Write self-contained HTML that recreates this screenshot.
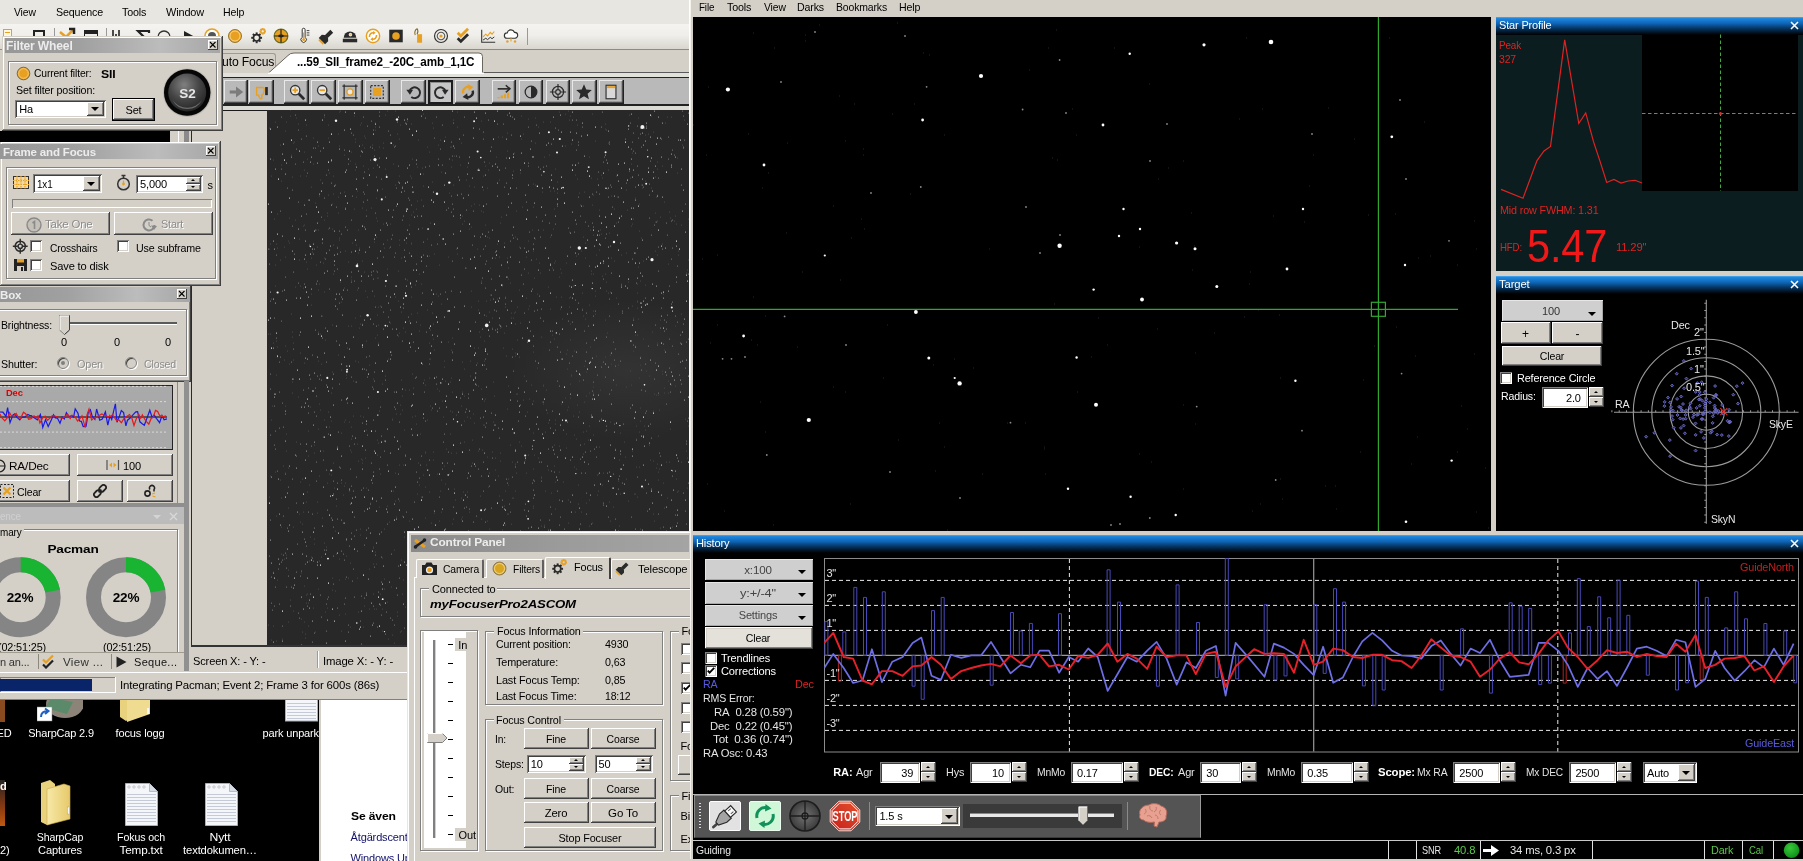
<!DOCTYPE html>
<html lang="en"><head><meta charset="utf-8"><title>Astro imaging session</title>
<style>
html,body{margin:0;padding:0;background:#000;}
body{width:1803px;height:861px;overflow:hidden;position:relative;font-family:"Liberation Sans",sans-serif;font-size:11px;}
#root{position:absolute;left:0;top:0;width:1803px;height:861px;overflow:hidden;background:#000;will-change:transform;}
#root div,#root svg{position:absolute;box-sizing:border-box;}
.t{white-space:nowrap;letter-spacing:-.15px;}
.btn{background:#d4d0c8;box-shadow:inset -1px -1px #404040,inset 1px 1px #fff,inset -2px -2px #808080,inset 2px 2px #d4d0c8;}
.fld{background:#fff;box-shadow:inset 1px 1px #808080,inset -1px -1px #fff,inset 2px 2px #404040,inset -2px -2px #d4d0c8;}
.chk{background:#fff;box-shadow:inset 1px 1px #808080,inset -1px -1px #fff,inset 2px 2px #404040,inset -2px -2px #d4d0c8;}
.grp{border:1px solid #808080;box-shadow:1px 1px 0 #fff,inset 1px 1px 0 #fff;}
.win{background:#d4d0c8;box-shadow:inset -1px -1px #404040,inset 1px 1px #d4d0c8,inset -2px -2px #808080,inset 2px 2px #fff;}
.clip{overflow:hidden;}

.ibtn{background:#b9b9b9;box-shadow:inset -1.5px -1.5px #222,inset 1px 1px #e8e8e8,inset -2.5px -2.5px #777;}
.ibtn.p{box-shadow:inset 0 0 0 2px #1c1c1c,inset 3px 3px #8c8c8c;background:#c6c6c6;}
</style></head>
<body><div id="root">
<div style="left:0px;top:0px;width:693px;height:700px;background:#d4d0c8;"></div><div style="left:0px;top:0px;width:693px;height:24px;background:#e8e6e1;"></div><div class="t" style="font-size:11px;line-height:11px;color:#000;left:14px;top:7px;transform:scaleX(0.944);transform-origin:0 0;">View</div><div class="t" style="font-size:11px;line-height:11px;color:#000;left:55.5px;top:7px;transform:scaleX(0.972);transform-origin:0 0;">Sequence</div><div class="t" style="font-size:11px;line-height:11px;color:#000;left:121.5px;top:7px;transform:scaleX(0.975);transform-origin:0 0;">Tools</div><div class="t" style="font-size:11px;line-height:11px;color:#000;left:165.5px;top:7px;transform:scaleX(0.994);transform-origin:0 0;">Window</div><div class="t" style="font-size:11px;line-height:11px;color:#000;left:222.5px;top:7px;transform:scaleX(0.967);transform-origin:0 0;">Help</div><div style="left:0px;top:24px;width:693px;height:25px;background:linear-gradient(#f5f4f1,#efeeea 45%,#d9d6ce);"></div><div style="left:0px;top:48.5px;width:693px;height:1.2px;background:#8f8b80;"></div><div style="left:2.5px;top:28.5px;width:9.5px;height:11px;border:1.300px solid #e8a020;background:#fff6e0;"></div><div style="left:4.5px;top:32px;width:5.5px;height:1.2px;background:#e8a020;"></div><div style="left:33px;top:30px;width:12px;height:12px;border:2px solid #222;"></div><div style="left:54px;top:28px;width:1px;height:16px;background:#999;"></div><svg style="left:57.0px;top:26.0px" width="20" height="20" viewBox="0 0 20 20"><path d="M3 6l6 5 7-7" stroke="#e8a020" stroke-width="2.5" fill="none"/><path d="M12 3h5v5" stroke="#222" stroke-width="2.5" fill="none"/></svg><div style="left:84px;top:30px;width:14px;height:12px;border:1.5px solid #222;border-top:4px solid #222;"></div><div style="left:106px;top:28px;width:1px;height:16px;background:#999;"></div><svg style="left:109.0px;top:26.0px" width="20" height="20" viewBox="0 0 20 20"><path d="M4 4v14M7 8v10M10 4v14M13 10v8M16 12v6" stroke="#222" stroke-width="1.6"/></svg><svg style="left:134.0px;top:26.0px" width="20" height="20" viewBox="0 0 20 20"><path d="M15 7V5H4l6 6-6 6h11v-2" stroke="#222" stroke-width="2.2" fill="none"/></svg><svg style="left:154.0px;top:26.0px" width="20" height="20" viewBox="0 0 20 20"><circle cx="10" cy="11" r="6" fill="none" stroke="#333" stroke-width="1.3"/></svg><svg style="left:179.0px;top:26.0px" width="20" height="20" viewBox="0 0 20 20"><path d="M5 5l11 6-11 6z" fill="#222"/></svg><svg style="left:202.0px;top:26.0px" width="20" height="20" viewBox="0 0 20 20"><circle cx="10" cy="10" r="7" fill="#fff" stroke="#e8a020" stroke-width="1.6"/><circle cx="10" cy="10" r="4" fill="#555"/></svg><svg style="left:226.0px;top:27.0px" width="18" height="18" viewBox="0 0 20 20"><circle cx="10" cy="10" r="7.2" fill="#e8a020" stroke="#8a6a20" stroke-width="1"/><circle cx="10" cy="10" r="5.6" fill="none" stroke="#ffd890" stroke-width="1"/></svg><svg style="left:248.5px;top:27.0px" width="18" height="18" viewBox="0 0 20 20"><circle cx="8.5" cy="12" r="3.5" fill="none" stroke="#2a2a2a" stroke-width="1.8"/><line x1="12.3" y1="12.0" x2="14.5" y2="12.0" stroke="#2a2a2a" stroke-width="2.2"/><line x1="11.2" y1="14.7" x2="12.7" y2="16.2" stroke="#2a2a2a" stroke-width="2.2"/><line x1="8.5" y1="15.8" x2="8.5" y2="18.0" stroke="#2a2a2a" stroke-width="2.2"/><line x1="5.8" y1="14.7" x2="4.3" y2="16.2" stroke="#2a2a2a" stroke-width="2.2"/><line x1="4.7" y1="12.0" x2="2.5" y2="12.0" stroke="#2a2a2a" stroke-width="2.2"/><line x1="5.8" y1="9.3" x2="4.3" y2="7.8" stroke="#2a2a2a" stroke-width="2.2"/><line x1="8.5" y1="8.2" x2="8.5" y2="6.0" stroke="#2a2a2a" stroke-width="2.2"/><line x1="11.2" y1="9.3" x2="12.7" y2="7.8" stroke="#2a2a2a" stroke-width="2.2"/><circle cx="15.2" cy="4.8" r="1.7" fill="none" stroke="#e8a020" stroke-width="0.6"/><line x1="16.6" y1="4.8" x2="18.8" y2="4.8" stroke="#e8a020" stroke-width="2.2"/><line x1="16.2" y1="5.8" x2="17.7" y2="7.3" stroke="#e8a020" stroke-width="2.2"/><line x1="15.2" y1="6.2" x2="15.2" y2="8.4" stroke="#e8a020" stroke-width="2.2"/><line x1="14.2" y1="5.8" x2="12.7" y2="7.3" stroke="#e8a020" stroke-width="2.2"/><line x1="13.8" y1="4.8" x2="11.6" y2="4.8" stroke="#e8a020" stroke-width="2.2"/><line x1="14.2" y1="3.8" x2="12.7" y2="2.3" stroke="#e8a020" stroke-width="2.2"/><line x1="15.2" y1="3.4" x2="15.2" y2="1.2" stroke="#e8a020" stroke-width="2.2"/><line x1="16.2" y1="3.8" x2="17.7" y2="2.3" stroke="#e8a020" stroke-width="2.2"/></svg><svg style="left:271.5px;top:27.0px" width="18" height="18" viewBox="0 0 20 20"><circle cx="10" cy="10" r="7.6" fill="#e8a020" stroke="#6b6b20" stroke-width="1.4"/><path d="M10 2.5v15M2.5 10h15" stroke="#222" stroke-width="1.3"/><ellipse cx="10" cy="10" rx="3.2" ry="1.6" fill="#222"/></svg><svg style="left:295.0px;top:27.0px" width="18" height="18" viewBox="0 0 20 20"><path d="M8 3a1.6 1.6 0 0 1 3.2 0v8.5a3 3 0 1 1-3.2 0z" fill="#fff" stroke="#333" stroke-width="1.1"/><circle cx="9.6" cy="14" r="1.7" fill="#e8a020"/><path d="M9.6 13V6" stroke="#e8a020" stroke-width="1.2"/><path d="M13 4h3M13 6.5h3M13 9h3" stroke="#333" stroke-width="1"/></svg><svg style="left:317.5px;top:27.0px" width="18" height="18" viewBox="0 0 20 20"><g transform="rotate(135 10 10)"><rect x="2.5" y="7.8" width="9" height="4.4" fill="#2a2a2a"/><path d="M11 7.300l2.200-2.300h4.800v10h-4.800l-2.200-2.300z" fill="#2a2a2a"/><rect x="18.300" y="6.500" width="1.800" height="7" fill="#e8a020"/></g></svg><svg style="left:340.7px;top:27.0px" width="18" height="18" viewBox="0 0 20 20"><path d="M3 12a7 7 0 0 1 14 0z" fill="#2a2a2a"/><rect x="2" y="13" width="16" height="4" fill="#2a2a2a"/><circle cx="10.5" cy="8.5" r="2" fill="#ddd"/><path d="M10.5 8.5l1.2-1" stroke="#e8a020" stroke-width="1"/></svg><svg style="left:363.5px;top:27.0px" width="18" height="18" viewBox="0 0 20 20"><circle cx="10" cy="10" r="7.4" fill="#fff" stroke="#e8a020" stroke-width="1.6"/><path d="M6 11c0-3 2-5 5-4.5M14 9c0 3-2 5-5 4.5" stroke="#e8a020" stroke-width="1.8" fill="none"/><path d="M10 4.5l3 2-3 2zM10 15.5l-3-2 3-2z" fill="#e8a020"/></svg><svg style="left:386.5px;top:27.0px" width="18" height="18" viewBox="0 0 20 20"><rect x="2.5" y="3" width="15" height="14" fill="#2a2a2a"/><circle cx="10" cy="10" r="4.2" fill="#e8a020"/></svg><svg style="left:409.0px;top:27.0px" width="18" height="18" viewBox="0 0 20 20"><rect x="9" y="8" width="5.5" height="9.5" fill="#e8a020"/><path d="M7 9c-1.5-3 0-6 2-7 1.5 2 1 4 0 6" fill="none" stroke="#8a6a20" stroke-width="1.2"/></svg><svg style="left:432.0px;top:27.0px" width="18" height="18" viewBox="0 0 20 20"><circle cx="10" cy="10" r="7.2" fill="none" stroke="#333" stroke-width="1.3"/><circle cx="10" cy="10" r="4.2" fill="none" stroke="#555" stroke-width="1.2"/><circle cx="10" cy="10" r="1.8" fill="#e8a020"/></svg><svg style="left:455.0px;top:27.0px" width="18" height="18" viewBox="0 0 20 20"><path d="M3 6.5l3.5 3.5 8-8" stroke="#e8a020" stroke-width="3.1" fill="none"/><path d="M3 12.5l3.5 3.5 8-8" stroke="#2a2a2a" stroke-width="3.1" fill="none"/></svg><svg style="left:479.0px;top:27.0px" width="18" height="18" viewBox="0 0 20 20"><path d="M3 3v14h15" stroke="#333" stroke-width="1.2" fill="none"/><path d="M4.5 11l3-3 2 2 3-4 2 2 2.5-3" stroke="#e8a020" stroke-width="1.2" fill="none"/><path d="M4.5 14.5l3-2 2 1.5 3-2.5 2 1.5 2.5-2" stroke="#333" stroke-width="1.1" fill="none"/></svg><svg style="left:501.6px;top:27.0px" width="18" height="18" viewBox="0 0 20 20"><path d="M5.5 12.5a3 3 0 0 1 .3-6 4.2 4.2 0 0 1 8-.6 3.3 3.3 0 0 1 .6 6.6z" fill="#fff" stroke="#333" stroke-width="1.3"/><circle cx="6" cy="16" r="1.4" fill="#e8a020"/><circle cx="14.5" cy="16" r="1.4" fill="#e8a020"/><path d="M10 11v5" stroke="#e8a020" stroke-width="1.2"/></svg><div style="left:526.5px;top:28px;width:1px;height:17px;background:#999;"></div><div style="left:191px;top:72px;width:498px;height:1px;background:#5a5a5a;"></div><div style="left:191px;top:73px;width:498px;height:3.7px;background:#e2e0da;"></div><div style="left:200px;top:53px;width:76px;height:20px;background:#d4d0c8;border:1px solid #a09c90;border-bottom:none;border-radius:3px 3px 0 0;"></div><div class="t" style="font-size:12.5px;line-height:12.5px;color:#000;left:222.3px;top:56px;transform:scaleX(0.977);transform-origin:0 0;">uto Focus</div><svg style="left:268px;top:52px;" width="218" height="22" viewBox="0 0 218 22"><path d="M0 21.500L20 3.500Q22 1 26 1H211Q214.500 1 214.500 4.500V21.500z" fill="#fff" stroke="#6a665c" stroke-width="1"/><rect x="0" y="20.500" width="216" height="2" fill="#fff"/></svg><div class="t" style="font-size:12.3px;line-height:12.3px;color:#000;font-weight:bold;left:296.7px;top:56.2px;transform:scaleX(0.949);transform-origin:0 0;">...59_SII_frame2_-20C_amb_1,1C</div><div style="left:191px;top:76.7px;width:498px;height:1.4px;background:#222;"></div><div style="left:190.8px;top:76px;width:1.2px;height:570px;background:#2a2a2a;"></div><div style="left:192px;top:77.5px;width:497px;height:27.5px;background:#b9b9b9;"></div><div style="left:191px;top:104.3px;width:498px;height:1.4px;background:#222;"></div><div style="left:191px;top:105.7px;width:498px;height:4.3px;background:#dcdad4;"></div><div class="ibtn" style="left:196.5px;top:79.5px;width:24.5px;height:24px;"></div><div class="ibtn" style="left:223.5px;top:79.5px;width:24.4px;height:24px;"></div><svg style="left:226.7px;top:82.5px" width="18" height="18" viewBox="0 0 20 20"><path d="M3 10h9" stroke="#7c7c7c" stroke-width="3.4"/><path d="M10 4l8 6-8 6z" fill="#7c7c7c"/></svg><div class="ibtn" style="left:249.3px;top:79.5px;width:24.4px;height:24px;"></div><svg style="left:252.5px;top:82.5px" width="18" height="18" viewBox="0 0 20 20"><path d="M4 5h6c2 0 3 1 2.5 3l-1 4c-.3 1-1 1.5-2 1.5l.5 3c0 1.5-2 1.5-2.4.3L6 13.5H4z" fill="none" stroke="#e8a020" stroke-width="1.5"/><rect x="13.5" y="4.5" width="3" height="9" fill="#2a2a2a"/></svg><div class="ibtn" style="left:284.3px;top:79.5px;width:24.4px;height:24px;"></div><svg style="left:287.5px;top:82.5px" width="18" height="18" viewBox="0 0 20 20"><circle cx="8" cy="8" r="5.2" fill="#e8e8e8" stroke="#333" stroke-width="1.5"/><path d="M12 12l6 6" stroke="#2a2a2a" stroke-width="3"/><path d="M5 8h6" stroke="#e8a020" stroke-width="2"/><path d="M8 5v6" stroke="#e8a020" stroke-width="2"/></svg><div class="ibtn" style="left:311.3px;top:79.5px;width:24.4px;height:24px;"></div><svg style="left:314.5px;top:82.5px" width="18" height="18" viewBox="0 0 20 20"><circle cx="8" cy="8" r="5.2" fill="#e8e8e8" stroke="#333" stroke-width="1.5"/><path d="M12 12l6 6" stroke="#2a2a2a" stroke-width="3"/><path d="M5 8h6" stroke="#e8a020" stroke-width="2"/></svg><div class="ibtn" style="left:338.2px;top:79.5px;width:24.4px;height:24px;"></div><svg style="left:341.4px;top:82.5px" width="18" height="18" viewBox="0 0 20 20"><rect x="3.5" y="3.5" width="13" height="13" fill="none" stroke="#333" stroke-width="1.4"/><path d="M1.5 3.5h3M3.5 1.5v3M15.5 3.5h3M16.5 1.5v3M1.5 16.5h3M3.5 15.5v3M15.5 16.5h3M16.5 15.5v3" stroke="#333" stroke-width="1.2"/><circle cx="10" cy="10" r="3.4" fill="#e8e8e8" stroke="#e8a020" stroke-width="1.4"/></svg><div class="ibtn" style="left:365.2px;top:79.5px;width:24.4px;height:24px;"></div><svg style="left:368.4px;top:82.5px" width="18" height="18" viewBox="0 0 20 20"><rect x="3" y="3" width="14" height="14" fill="none" stroke="#333" stroke-width="1.3" stroke-dasharray="2.2 1.6"/><rect x="5.5" y="5.5" width="9" height="9" fill="#e8a020"/></svg><div class="ibtn" style="left:401.3px;top:79.5px;width:24.4px;height:24px;"></div><svg style="left:404.5px;top:82.5px" width="18" height="18" viewBox="0 0 20 20"><path d="M5 9a6 6 0 1 1 2 6.5" fill="none" stroke="#2a2a2a" stroke-width="2.2"/><path d="M1.5 7.5l4 5.5 3.5-5.5z" fill="#2a2a2a"/></svg><div class="ibtn p" style="left:428.3px;top:79.5px;width:24.4px;height:24px;"></div><svg style="left:431.5px;top:82.5px" width="18" height="18" viewBox="0 0 20 20"><path d="M15 9a6 6 0 1 0-2 6.5" fill="none" stroke="#2a2a2a" stroke-width="2.2"/><path d="M18.500 7.5l-4 5.5-3.500-5.500z" fill="#2a2a2a"/></svg><div class="ibtn" style="left:455.4px;top:79.5px;width:24.4px;height:24px;"></div><svg style="left:458.6px;top:82.5px" width="18" height="18" viewBox="0 0 20 20"><path d="M4.800 11.500A5.400 5.400 0 0 1 12.500 5" fill="none" stroke="#e8a020" stroke-width="2.600"/><path d="M9.500 1l6.500 3.500-5 4z" fill="#e8a020"/><path d="M15.200 8.500A5.400 5.400 0 0 1 7.500 15" fill="none" stroke="#2a2a2a" stroke-width="2.600"/><path d="M10.500 19l-6.500-3.500 5-4z" fill="#2a2a2a"/></svg><div class="ibtn" style="left:491.5px;top:79.5px;width:24.4px;height:24px;"></div><svg style="left:494.7px;top:82.5px" width="18" height="18" viewBox="0 0 20 20"><path d="M3 6.500h13" stroke="#2a2a2a" stroke-width="1.800"/><path d="M12 2.500l4.500 4-4.500 4" stroke="#2a2a2a" stroke-width="1.800" fill="none"/><path d="M4 17v-1.500M7.500 17v-3M11 17v-4.500M14.500 17v-6.500" stroke="#e8a020" stroke-width="2.400"/></svg><div class="ibtn" style="left:518.5px;top:79.5px;width:24.4px;height:24px;"></div><svg style="left:521.7px;top:82.5px" width="18" height="18" viewBox="0 0 20 20"><circle cx="10" cy="10" r="6.500" fill="none" stroke="#2a2a2a" stroke-width="1.400"/><path d="M10 3.500a6.500 6.500 0 0 1 0 13z" fill="#2a2a2a"/></svg><div class="ibtn" style="left:545.6px;top:79.5px;width:24.4px;height:24px;"></div><svg style="left:548.8px;top:82.5px" width="18" height="18" viewBox="0 0 20 20"><circle cx="10" cy="10" r="6.200" fill="none" stroke="#2a2a2a" stroke-width="1.400"/><circle cx="10" cy="10" r="2.600" fill="none" stroke="#2a2a2a" stroke-width="1.300"/><path d="M10 1v6M10 13v6M1 10h6M13 10h6" stroke="#2a2a2a" stroke-width="1.300"/></svg><div class="ibtn" style="left:572.2px;top:79.5px;width:24.4px;height:24px;"></div><svg style="left:575.4px;top:82.5px" width="18" height="18" viewBox="0 0 20 20"><path d="M10 1.500l2.500 5.800 6.200.500-4.700 4.100 1.500 6.100L10 14.700 4.500 18l1.500-6.100L1.300 7.800l6.200-.500z" fill="#2a2a2a"/></svg><div class="ibtn" style="left:599.2px;top:79.5px;width:24.4px;height:24px;"></div><svg style="left:602.4px;top:82.5px" width="18" height="18" viewBox="0 0 20 20"><rect x="4.500" y="2.500" width="11" height="15" fill="#d8d8d8" stroke="#333" stroke-width="1.300"/><rect x="5.500" y="3.500" width="9" height="2.200" fill="#e8a020"/></svg><div style="left:192px;top:110px;width:75px;height:535px;background:#d4d0c8;border-top:1.200px solid #1a1a1a;"></div><svg style="left:267px;top:110px;" width="422" height="536" viewBox="-1 0 422 536"><defs><radialGradient id="neb"><stop offset="0" stop-color="#3a3a3a"/><stop offset="1" stop-color="#3a3a3a" stop-opacity="0"/></radialGradient></defs><rect x="-1" width="422" height="536" fill="#282828"/><ellipse cx="360" cy="260" rx="120" ry="70" fill="url(#neb)" opacity=".6"/><path d="M30 287h1M24 272h1M183 37h1M179 443h1M20 460h1M61 63h1M26 32h1M286 229h1M247 243h1M334 375h1M64 262h1M9 247h1M64 94h1M165 214h1M267 33h1M88 87h1M22 0h1M43 195h1M368 329h1M106 186h1M196 259h1M43 184h1M349 87h1M400 283h1M110 197h1M345 397h1M218 191h1M12 150h1M154 118h1M275 429h1M316 256h1M399 388h1M413 352h1M231 70h1M348 113h1M109 225h1M234 420h1M236 133h1M369 505h1M31 129h1M143 105h1M185 10h1M263 275h1M44 142h1M328 145h1M240 375h1M100 59h1M21 108h1M128 407h1M211 95h1M8 134h1M309 295h1M200 501h1M290 527h1M170 186h1M108 88h1M119 130h1M130 191h1M85 271h1M18 12h1M370 209h1M287 372h1M13 71h1M106 40h1M260 345h1M128 304h1M291 362h1M50 479h1M412 502h1M189 144h1M373 377h1M378 261h1M127 75h1M133 450h1M316 450h1M420 316h1M180 147h1M43 447h1M394 134h1M215 102h1M231 386h1M271 153h1M70 87h1M381 266h1M59 103h1M144 49h1M221 202h1M363 116h1M105 58h1M193 296h1M272 163h1M245 208h1M253 6h1M372 255h1M284 225h1M281 496h1M311 271h1M280 509h1M60 28h1M159 200h1M71 2h1M148 512h1M406 111h1M21 254h1M387 103h1M342 411h1M133 148h1M397 13h1M208 497h1M325 325h1M104 35h1M372 529h1M299 240h1M51 451h1M84 133h1M275 531h1M385 22h1M246 499h1M365 241h1M327 507h1M251 332h1M155 76h1M86 6h1M286 99h1M232 343h1M132 304h1M372 247h1M156 270h1M407 106h1M67 421h1M218 206h1M16 449h1M328 246h1M199 57h1M159 510h1M67 481h1M387 112h1M213 171h1M286 480h1M166 428h1M417 309h1M322 237h1M247 356h1M1 18h1M377 71h1M275 12h1M149 57h1M57 502h1M105 484h1M224 218h1M25 417h1M232 504h1M270 436h1M130 161h1M95 56h1M332 280h1M270 517h1M370 8h1M305 306h1M89 334h1M383 78h1M45 498h1M60 15h1M385 506h1M87 60h1M347 339h1M9 138h1M301 197h1M184 414h1M297 288h1M72 1h1M321 524h1M78 265h1M331 337h1M36 476h1M147 175h1M373 128h1M65 84h1M137 280h1M83 342h1M87 208h1M132 337h1M284 499h1M206 522h1M396 278h1M150 30h1M177 374h1M396 283h1M337 210h1M95 517h1M53 447h1M358 143h1M107 228h1M1 387h1M267 8h1M401 352h1M43 77h1M327 186h1M381 424h1M372 298h1M25 250h1M287 499h1M139 170h1M230 27h1M193 409h1M385 351h1M89 81h1M2 366h1M102 393h1M360 391h1M302 6h1M274 438h1M131 391h1M362 261h1M296 443h1M119 1h1M288 490h1M196 111h1M248 101h1M76 376h1M145 278h1M205 304h1M107 20h1M76 45h1M399 488h1M252 213h1M166 240h1M407 532h1M16 137h1M272 528h1M319 57h1M71 128h1M265 242h1M60 119h1M300 297h1M134 484h1M121 138h1M389 52h1M124 525h1M340 183h1M92 306h1M83 42h1M256 266h1M342 312h1M201 467h1M78 446h1M344 464h1M94 98h1M105 438h1M41 375h1M220 377h1M366 384h1M327 181h1M403 501h1M178 339h1M213 11h1M112 364h1M400 154h1M403 275h1M196 286h1M52 70h1M171 155h1M131 130h1M120 529h1M325 85h1M367 236h1M311 83h1M193 388h1M210 238h1M383 6h1M221 53h1M348 275h1M213 101h1M265 323h1M418 341h1M173 422h1M291 2h1M45 54h1M340 33h1M149 91h1M204 425h1M73 192h1M170 35h1M348 188h1M80 152h1M15 356h1M66 378h1M114 448h1M159 514h1M400 271h1M89 468h1M216 291h1M135 355h1M125 35h1M56 148h1M286 356h1M105 454h1M265 97h1M17 21h1M288 187h1M351 416h1M20 131h1M54 408h1M296 432h1M229 134h1M151 221h1M282 127h1M60 302h1M48 155h1M87 32h1M153 90h1M106 132h1M356 497h1M155 446h1M34 369h1M187 520h1M17 236h1M237 187h1M95 307h1M216 315h1M237 415h1M327 31h1M348 66h1M18 324h1M231 430h1M390 362h1M245 61h1M46 429h1M399 7h1M337 19h1M32 176h1M376 316h1M243 208h1M3 310h1M403 532h1M214 340h1M232 218h1M203 197h1M99 187h1M188 305h1M71 36h1M246 43h1M244 529h1M116 138h1M92 214h1M369 183h1M269 495h1M171 364h1M24 222h1M305 176h1M277 322h1M321 416h1M276 415h1M38 15h1M77 504h1M388 87h1M210 341h1M337 247h1M264 120h1M110 233h1M126 533h1M346 151h1M204 478h1M244 473h1M419 160h1M47 522h1M98 231h1M8 531h1M57 230h1M211 60h1M209 492h1M308 146h1M111 37h1M302 214h1M162 220h1M159 129h1M133 521h1M249 533h1M265 398h1M258 363h1M265 291h1M201 119h1M222 436h1M350 438h1M65 135h1M63 365h1M219 127h1M143 204h1M85 306h1M75 385h1M260 199h1M244 496h1M409 382h1M280 177h1M324 413h1M299 259h1M3 530h1M110 168h1M177 27h1M108 108h1M206 313h1M234 27h1M187 471h1M183 343h1M284 158h1M87 54h1M289 83h1M134 300h1M165 18h1M181 364h1M209 498h1M228 47h1M96 496h1M252 519h1M398 352h1M140 241h1M251 247h1M56 310h1M158 355h1M71 505h1M50 251h1M225 272h1M83 216h1M211 477h1M240 369h1M316 82h1M123 477h1M330 381h1M194 494h1M286 81h1M59 106h1M356 422h1M302 187h1M141 115h1M356 332h1M51 366h1M346 99h1M403 194h1M213 530h1M191 434h1M363 275h1M153 523h1M307 402h1M315 344h1M348 425h1M68 396h1M131 29h1M162 516h1M317 148h1M386 284h1M149 504h1M340 60h1M396 398h1M165 432h1M56 182h1M332 449h1M258 147h1M254 442h1M90 120h1M151 375h1M353 174h1M265 74h1M92 425h1M13 417h1M212 227h1M339 515h1M298 244h1M80 216h1M303 34h1M265 141h1M129 24h1M192 55h1M200 441h1M88 135h1M56 7h1M246 203h1M283 383h1M338 20h1M101 499h1M387 141h1M8 406h1M410 381h1M122 213h1M342 245h1M358 455h1M324 4h1M352 384h1M186 379h1M127 187h1M132 336h1M226 518h1M290 519h1M317 133h1M12 370h1M293 163h1M28 8h1M408 369h1M324 95h1M187 390h1M13 444h1M117 5h1M247 354h1M94 35h1M153 387h1M332 135h1M220 60h1M322 120h1M92 206h1M50 36h1M221 128h1M364 114h1M203 96h1M275 276h1M155 484h1M35 116h1M185 75h1M169 364h1M418 333h1M135 218h1M282 12h1M68 444h1M237 381h1M245 475h1M22 490h1M7 155h1M275 275h1M108 127h1M221 363h1M283 429h1M405 482h1M323 68h1M90 143h1M7 362h1M297 518h1M323 161h1M368 316h1M115 38h1M73 373h1M416 10h1M393 520h1M141 280h1M176 257h1M23 45h1M144 264h1M391 300h1M333 124h1M279 303h1M81 312h1M267 129h1M13 388h1M259 483h1M131 355h1M334 166h1M194 106h1M213 279h1M300 413h1M268 149h1M413 488h1M196 332h1M40 516h1M121 412h1M45 38h1M224 447h1M142 66h1M409 63h1M309 69h1M143 133h1M198 531h1M360 172h1M314 183h1M112 196h1M149 203h1M160 450h1M329 466h1M143 134h1M96 38h1M371 357h1M302 230h1M299 498h1M320 466h1M389 111h1M216 251h1M315 127h1M186 46h1M335 363h1M141 411h1M260 163h1M92 46h1M133 270h1M83 317h1M407 216h1M309 509h1M248 363h1M337 14h1M202 266h1M331 140h1M227 148h1M9 104h1M339 79h1M232 494h1M389 233h1M251 524h1M24 67h1M298 338h1M283 520h1M419 378h1M76 82h1M371 322h1M385 301h1M133 202h1M134 406h1M43 148h1M90 351h1M61 364h1M55 341h1M105 437h1M144 500h1M58 437h1M78 268h1M287 399h1M233 217h1M321 316h1M132 15h1M152 324h1M87 272h1M300 1h1M180 519h1M6 109h1M114 79h1M151 482h1M60 85h1M248 429h1M174 291h1M24 227h1M254 97h1M35 178h1M273 227h1M216 502h1M65 164h1M70 24h1M357 347h1M302 274h1M39 484h1M94 214h1M181 83h1M343 254h1M48 173h1M245 388h1M364 341h1M367 384h1M160 360h1M203 181h1M215 315h1M176 356h1M151 164h1M318 393h1M115 33h1M97 181h1M132 522h1M375 229h1M325 201h1M251 137h1M164 203h1M157 408h1M286 335h1M242 173h1M215 66h1M131 223h1M101 459h1M247 202h1M335 434h1M23 204h1M185 532h1M194 114h1M39 49h1M182 272h1M157 462h1M369 192h1M259 302h1M36 512h1M152 215h1M193 446h1M309 15h1M209 253h1M109 345h1M132 295h1M204 330h1M239 404h1M143 14h1M51 86h1M341 392h1M258 462h1M369 191h1M171 281h1M149 435h1M159 310h1M253 336h1M215 80h1M365 208h1M77 310h1M212 449h1M392 107h1M92 419h1M21 133h1M48 120h1M329 534h1M392 210h1M350 255h1M364 43h1M371 524h1M198 70h1M300 390h1M9 237h1M251 180h1M49 392h1M211 222h1M161 233h1M117 59h1M189 468h1M185 409h1M395 481h1M236 223h1M187 491h1M247 381h1M389 59h1M301 10h1M53 254h1M64 119h1M20 398h1M363 54h1M117 266h1M212 386h1M174 478h1M33 463h1M109 330h1M195 382h1M273 368h1M240 276h1M89 180h1M65 384h1M5 233h1M5 462h1M0 515h1M107 13h1M52 455h1M231 436h1M137 497h1M194 407h1M73 521h1M32 243h1M247 127h1M420 109h1M5 50h1M110 333h1M337 321h1M348 480h1M243 203h1M320 330h1M297 508h1M135 470h1M146 431h1M27 177h1M341 123h1M365 443h1M350 528h1M351 494h1M239 148h1M323 164h1M343 86h1M147 472h1M31 404h1M281 45h1M189 17h1M54 206h1M119 396h1M269 258h1M239 462h1M353 478h1M389 354h1M158 444h1M37 524h1M154 58h1M414 222h1M87 29h1M226 286h1M275 120h1M98 100h1M224 342h1M329 385h1M98 378h1M159 529h1M163 413h1M318 262h1M308 359h1M83 167h1M49 403h1M403 7h1M115 114h1M155 64h1M17 147h1M63 283h1M362 68h1M315 322h1M173 402h1M199 435h1M306 325h1M343 148h1M389 145h1M280 313h1M174 507h1M208 263h1M216 430h1M369 225h1M216 530h1M7 176h1M52 224h1M127 391h1M339 524h1M182 301h1M165 229h1M409 48h1M249 197h1M120 249h1M307 65h1M144 307h1M185 436h1M269 184h1M52 300h1M116 419h1M70 103h1M179 494h1M161 146h1M194 282h1M182 37h1M138 133h1M275 61h1M108 454h1M125 54h1M287 151h1M37 528h1M258 188h1M184 499h1M47 93h1M18 445h1M329 69h1M358 369h1M65 353h1M49 137h1M292 199h1M342 182h1M337 164h1M82 517h1M38 493h1M22 6h1M329 365h1M223 515h1M358 80h1M301 441h1M419 348h1M235 238h1M32 66h1M351 514h1M93 13h1M24 283h1M206 94h1M311 528h1M3 189h1M142 487h1M248 443h1M394 56h1M111 301h1M40 493h1M293 187h1M390 285h1M235 455h1M249 230h1M39 382h1M371 94h1M318 321h1M8 231h1M248 526h1M32 372h1M136 427h1M282 199h1M234 176h1M265 396h1M365 109h1M414 35h1M391 359h1M2 134h1M371 268h1M310 375h1M266 168h1M388 285h1M143 187h1M2 224h1M333 65h1M51 174h1M35 402h1M25 233h1M219 411h1M239 41h1M131 66h1M166 144h1M334 68h1M94 353h1M8 265h1M109 205h1M1 139h1M137 222h1M311 264h1M159 37h1M32 412h1M42 427h1M71 130h1M276 47h1M249 284h1M34 414h1M248 284h1M396 240h1M164 72h1M236 520h1M208 427h1M56 110h1M225 312h1M119 492h1M116 479h1M300 425h1M242 463h1M202 251h1M402 319h1M367 88h1M194 252h1M302 288h1M331 100h1M96 26h1M149 384h1M217 289h1M244 239h1M350 371h1M45 28h1M252 63h1M361 5h1M410 141h1M325 277h1M94 350h1M76 312h1M199 382h1M210 191h1M287 314h1M91 138h1M394 261h1M321 47h1M352 323h1M297 4h1M76 178h1M394 264h1M301 122h1M204 353h1M114 521h1M325 164h1M77 373h1M162 296h1M382 350h1M319 450h1M173 194h1M230 472h1M209 139h1M380 520h1M217 56h1M321 195h1M377 175h1M82 340h1M236 396h1M265 359h1M25 33h1M33 509h1M201 76h1M25 501h1M169 279h1M401 102h1M17 363h1M134 286h1M36 60h1M143 487h1M103 98h1M287 310h1M157 342h1M326 463h1M157 275h1M184 228h1M231 147h1M124 309h1M234 175h1M86 99h1M177 271h1M372 311h1M233 107h1M7 12h1M278 280h1M91 218h1M300 509h1M41 451h1M371 121h1M173 370h1M229 189h1M306 241h1M5 516h1M230 514h1M27 110h1M358 277h1M114 274h1M98 320h1M219 347h1M117 332h1M71 449h1M154 510h1M402 108h1M3 66h1M36 253h1M72 172h1M83 329h1M201 402h1M109 111h1M362 473h1M87 251h1M107 442h1M108 499h1M287 59h1M81 381h1M143 68h1M311 302h1M101 255h1M19 241h1M130 226h1M213 455h1M375 151h1M387 67h1M418 163h1M105 269h1M65 66h1M38 66h1M337 471h1M126 440h1M20 512h1M385 404h1M40 346h1M280 360h1M318 286h1M217 115h1M330 364h1M109 168h1M338 172h1M339 223h1M386 411h1M155 4h1M104 368h1M370 157h1M275 294h1M61 317h1M315 96h1M17 296h1M229 428h1M213 409h1M16 250h1M141 211h1M192 453h1M257 350h1M240 404h1M306 357h1M395 184h1M0 224h1M56 433h1M157 536h1M404 417h1M298 324h1M184 282h1M161 382h1M260 9h1M9 470h1M273 416h1M176 251h1M31 150h1M299 240h1M18 341h1M293 294h1M193 33h1M413 204h1M141 533h1M50 120h1M71 470h1M142 498h1M410 432h1M203 117h1M55 153h1M405 524h1M338 181h1M125 381h1M222 158h1M167 460h1M221 419h1M353 145h1M165 350h1M247 246h1M73 260h1M316 334h1M97 348h1M210 200h1M291 336h1M114 499h1M124 310h1M399 527h1M30 14h1M373 75h1M28 332h1M310 426h1M261 196h1M342 519h1M224 208h1M222 190h1M310 394h1M327 204h1M182 324h1M230 498h1M369 387h1M210 276h1M127 363h1M420 150h1M161 268h1M188 343h1M78 290h1M111 397h1M313 402h1M377 320h1M131 135h1M396 92h1M157 343h1M282 81h1M244 388h1M20 358h1M390 370h1M172 30h1M167 449h1M79 256h1M243 414h1M285 119h1M82 453h1M313 141h1M303 265h1M414 468h1M262 490h1M92 15h1M107 49h1M64 215h1M369 174h1M215 455h1M107 17h1M59 498h1M183 57h1M410 145h1M397 499h1M82 51h1M129 502h1M316 292h1M93 349h1M390 326h1M380 24h1M395 373h1M157 377h1M70 245h1M90 502h1M266 345h1M260 131h1M216 231h1M123 242h1M83 170h1M239 23h1M50 180h1M40 321h1M112 484h1M372 419h1M175 482h1M219 78h1M230 366h1M139 11h1M253 29h1M298 153h1M315 270h1M147 306h1M163 300h1M77 469h1M372 171h1M317 209h1M46 343h1M292 159h1M384 222h1M206 238h1M63 311h1M161 249h1M34 522h1M94 151h1M206 484h1M242 335h1M327 257h1M165 342h1M273 367h1M176 459h1M292 535h1M155 365h1M270 348h1M321 283h1M183 268h1M196 431h1M173 62h1M13 55h1M377 25h1M199 307h1M39 159h1M122 114h1M343 427h1M351 350h1M171 411h1M315 468h1M64 480h1M374 78h1M289 72h1M192 493h1M163 421h1M408 114h1M389 85h1M110 215h1M166 403h1M187 470h1M189 525h1M227 348h1M294 209h1M153 174h1M297 36h1M239 299h1M238 498h1M312 95h1M321 390h1M388 358h1M308 329h1M145 102h1M206 77h1M172 381h1M201 114h1M364 196h1M97 28h1M274 292h1M184 243h1M59 373h1M237 197h1M64 468h1M184 50h1M351 493h1M178 447h1M232 113h1M367 225h1M240 158h1M299 300h1M148 314h1M196 311h1M255 290h1M50 222h1M218 507h1M325 125h1M108 161h1M295 372h1M50 319h1M232 351h1M38 485h1M183 240h1M116 469h1M127 1h1M286 153h1M77 141h1M240 169h1M369 198h1M4 296h1M261 289h1M392 521h1M229 531h1M301 188h1M42 297h1M119 159h1M148 99h1M38 152h1M175 307h1M51 294h1M314 199h1M14 529h1M106 499h1M329 522h1M36 115h1M247 214h1M180 232h1M202 308h1M277 381h1M255 24h1M188 139h1M164 13h1M375 378h1M368 357h1M69 137h1M54 130h1M150 353h1M392 418h1M222 185h1M340 518h1M38 392h1M239 153h1M315 206h1M407 276h1M381 335h1M274 82h1M90 252h1M162 113h1M291 167h1M73 323h1M161 42h1M262 432h1M411 490h1M227 360h1M184 302h1M198 158h1M413 115h1M168 184h1M333 463h1M238 246h1M383 484h1M46 434h1M162 249h1M96 162h1M80 468h1M270 17h1M144 487h1M332 120h1M325 283h1M129 506h1M12 35h1M267 75h1M359 100h1M36 42h1M244 352h1M46 335h1M79 238h1M136 320h1M303 266h1M189 2h1" stroke="#424242" stroke-width="1.25" fill="none"/><path d="M136 81h1M344 97h1M269 200h1M281 410h1M250 311h1M354 506h1M120 207h1M54 133h1M367 43h1M364 149h1M98 260h1M111 2h1M291 276h1M229 14h1M292 513h1M83 110h1M379 450h1M409 212h1M409 348h1M123 129h1M383 190h1M246 485h1M386 269h1M220 10h1M234 175h1M325 272h1M320 489h1M258 271h1M292 242h1M58 65h1M65 384h1M92 511h1M68 231h1M304 10h1M24 369h1M30 503h1M28 462h1M113 69h1M345 232h1M351 211h1M350 379h1M354 467h1M193 84h1M161 254h1M111 48h1M98 314h1M342 75h1M44 448h1M315 270h1M411 265h1M26 144h1M217 249h1M398 113h1M56 440h1M2 264h1M122 200h1M390 68h1M411 139h1M127 299h1M382 534h1M316 221h1M53 270h1M105 214h1M377 254h1M47 38h1M194 514h1M129 12h1M14 181h1M124 510h1M79 120h1M314 17h1M346 441h1M378 16h1M318 491h1M163 135h1M35 52h1M175 332h1M315 454h1M65 474h1M107 321h1M86 426h1M27 54h1M69 373h1M178 440h1M6 296h1M383 48h1M397 523h1M22 496h1M77 117h1M252 295h1M129 225h1M179 353h1M185 13h1M181 49h1M215 22h1M215 29h1M343 77h1M330 62h1M44 532h1M259 232h1M94 313h1M86 334h1M63 51h1M367 419h1M111 6h1M237 188h1M84 326h1M196 398h1M112 297h1M266 371h1M294 460h1M310 35h1M357 435h1M86 171h1M260 17h1M210 59h1M98 247h1M318 404h1M244 68h1M335 393h1M211 339h1M60 324h1M312 487h1M242 402h1M286 344h1M265 134h1M192 333h1M276 417h1M88 367h1M168 7h1M267 251h1M197 158h1M103 162h1M180 342h1M223 398h1M99 75h1M207 267h1M197 302h1M354 201h1M404 40h1M268 15h1M413 274h1M154 254h1M324 113h1M123 444h1M212 146h1M383 328h1M264 373h1M287 114h1M346 422h1M109 162h1M134 231h1M393 29h1M242 492h1M6 208h1M395 526h1M174 55h1M265 380h1M155 308h1M153 346h1M398 421h1M253 165h1M342 465h1M99 325h1M316 424h1M373 280h1M238 216h1M157 57h1M331 84h1M235 467h1M404 138h1M270 513h1M285 160h1M108 67h1M374 75h1M347 256h1M367 143h1M141 90h1M281 113h1M1 446h1M28 393h1M69 199h1M2 279h1M208 275h1M7 321h1M52 265h1M118 65h1M357 29h1M223 37h1M372 18h1M228 495h1M105 279h1M273 65h1M257 306h1M85 381h1M231 328h1M216 205h1M100 298h1M148 362h1M358 440h1M2 410h1M210 516h1M256 203h1M164 298h1M128 78h1M404 110h1M164 192h1M148 508h1M169 301h1M370 517h1M417 476h1M66 155h1M355 314h1M83 267h1M112 347h1M420 308h1M220 441h1M42 484h1M147 241h1M23 477h1M404 236h1M343 163h1M409 156h1M48 286h1M110 482h1M155 132h1M325 206h1M239 167h1M237 194h1M83 162h1M17 167h1M76 450h1M302 137h1M18 458h1M311 445h1M230 520h1M71 357h1M83 376h1M48 174h1M237 58h1M183 102h1M3 493h1M264 501h1M125 100h1M135 198h1M17 304h1M398 265h1M66 161h1M360 422h1M119 355h1M177 182h1M69 159h1M36 174h1M410 516h1M341 32h1M256 159h1M401 258h1M12 101h1M188 46h1M157 311h1M223 303h1M107 51h1M106 262h1M172 39h1M157 8h1M179 476h1M345 364h1M166 468h1M71 193h1M19 78h1M115 147h1M110 305h1M326 339h1M3 467h1M130 389h1M254 463h1M138 402h1M264 179h1M252 138h1M6 496h1M416 30h1M38 436h1M227 315h1M325 524h1M56 5h1M25 269h1M28 346h1M364 32h1M86 407h1M287 320h1M290 20h1M370 65h1M214 219h1M275 292h1M176 521h1M420 3h1M390 137h1M137 346h1M314 457h1M300 211h1M199 387h1M390 283h1M73 441h1M365 23h1M150 431h1M191 47h1M420 373h1M124 219h1M341 189h1M318 203h1M11 318h1M195 450h1M199 477h1M282 397h1M17 364h1M291 224h1M61 179h1M362 298h1M226 200h1M224 219h1M363 39h1M76 494h1M337 267h1M330 510h1M124 125h1M270 120h1M419 504h1M204 463h1M126 37h1M216 52h1M355 468h1M49 266h1M13 211h1M244 125h1M396 221h1M333 257h1M268 107h1M338 316h1M126 515h1M98 106h1M289 381h1M396 443h1M334 2h1M176 324h1M350 87h1M148 54h1M391 479h1M32 334h1M403 194h1M266 201h1M285 486h1M351 366h1M375 77h1M243 25h1M321 156h1M177 524h1M339 363h1M117 87h1M83 172h1M46 139h1M86 487h1M198 299h1M17 443h1M102 37h1M317 363h1M271 518h1M291 415h1M78 467h1M281 310h1M283 404h1M25 239h1M47 120h1M143 177h1M353 433h1M265 388h1M168 274h1M415 38h1M82 394h1M83 142h1M65 417h1M46 302h1M350 421h1M18 477h1M30 173h1M373 260h1M161 56h1M53 107h1M23 252h1M273 371h1M60 487h1M283 499h1M340 87h1M234 440h1M33 29h1M274 111h1M46 523h1M48 371h1M219 244h1M287 456h1M115 134h1M224 348h1M417 94h1M109 517h1M249 352h1M60 60h1M360 430h1M381 85h1M161 350h1M335 153h1M99 16h1M39 63h1M73 124h1M198 502h1M112 495h1M308 40h1M134 110h1M198 397h1M99 267h1M399 125h1M215 508h1M256 138h1M63 73h1M99 90h1M113 505h1M407 467h1M103 353h1M312 335h1M331 125h1M403 111h1M310 193h1M57 218h1M184 94h1M352 344h1M65 371h1M338 50h1M304 30h1M38 26h1M45 38h1M204 135h1M93 171h1M260 56h1M184 46h1M73 410h1M199 513h1M96 488h1M342 136h1M313 363h1M20 466h1M312 106h1M131 468h1M218 259h1M15 317h1M418 232h1M79 293h1M77 488h1M236 77h1M338 227h1M109 148h1M218 94h1M381 108h1M84 86h1M205 506h1M307 190h1M387 215h1M126 297h1M398 294h1M377 188h1M391 343h1M140 207h1M315 460h1M68 97h1M412 233h1M310 32h1M287 18h1M333 309h1M174 359h1M402 498h1M63 408h1M382 314h1M108 391h1M420 229h1M340 407h1M376 18h1M69 498h1M93 486h1M409 413h1M224 458h1M58 252h1M113 197h1M413 75h1M407 206h1M52 152h1M153 509h1M229 462h1M27 5h1M390 532h1M239 5h1M113 472h1M136 518h1M418 334h1M68 389h1M212 308h1M102 50h1M383 379h1M263 31h1M282 232h1M141 143h1M42 269h1M82 359h1M117 524h1M331 464h1M238 105h1M117 270h1M296 419h1M105 496h1M158 156h1M298 439h1M308 114h1M98 420h1M14 516h1M335 395h1M155 145h1M365 235h1M380 236h1M9 361h1M383 125h1M137 345h1M71 274h1M48 352h1M279 356h1M404 366h1M258 92h1M130 364h1M260 418h1M275 57h1M75 444h1M7 477h1M350 369h1M28 39h1M366 531h1M39 496h1M104 373h1M155 273h1M146 392h1M387 253h1M116 341h1M107 445h1M80 54h1M200 288h1M323 305h1M306 122h1M273 199h1M106 46h1M105 161h1M15 406h1M31 508h1M171 478h1M278 300h1M242 131h1M271 352h1M155 96h1M408 172h1M64 278h1M38 104h1M58 440h1M398 219h1M184 151h1M126 147h1M36 429h1M96 62h1M273 434h1M278 56h1M80 515h1M312 349h1M113 422h1M355 453h1M72 83h1M127 143h1M299 312h1M227 142h1M81 380h1M328 337h1M388 435h1M392 346h1M395 417h1M54 73h1M188 425h1M207 212h1M213 173h1M407 449h1M244 7h1M228 201h1M229 498h1M12 247h1M306 519h1M201 340h1M333 17h1M337 128h1M95 378h1M255 174h1M104 277h1M8 145h1M323 414h1M119 414h1M279 468h1M388 504h1M109 55h1M324 84h1M417 258h1M217 154h1M58 494h1M317 251h1M158 222h1M375 507h1M218 313h1M249 291h1M105 169h1M188 525h1M100 418h1M127 36h1M263 150h1M146 432h1M275 211h1M80 522h1M369 16h1M88 420h1M325 117h1M0 139h1M322 341h1M41 135h1M135 106h1M105 310h1M333 301h1M148 267h1M81 336h1M335 52h1M229 14h1M33 461h1M389 235h1M101 246h1M240 477h1M273 352h1M208 406h1M54 228h1M304 212h1M335 252h1M361 61h1M415 383h1M29 434h1M260 53h1M401 176h1M47 220h1M217 136h1M90 178h1M320 216h1M89 441h1M69 138h1M346 314h1M339 525h1M69 337h1M216 255h1M306 479h1M134 77h1M289 426h1M56 88h1M53 206h1M226 422h1M368 173h1M65 446h1M149 372h1M363 407h1M341 284h1M227 220h1M58 360h1M328 82h1M324 84h1M379 401h1M378 383h1M52 41h1M136 140h1M284 301h1M301 253h1M120 21h1M107 197h1M100 380h1M282 452h1M362 13h1M185 99h1M137 169h1M43 336h1M258 406h1M199 368h1M178 100h1M291 536h1M395 234h1M201 399h1M30 20h1M11 282h1M85 459h1M404 192h1M46 418h1M221 226h1M15 445h1M310 307h1M302 392h1M261 122h1M72 142h1M25 162h1M203 488h1M98 483h1M51 269h1M49 171h1M284 337h1M345 446h1M394 139h1M283 125h1M57 149h1M317 112h1M40 303h1M398 212h1M320 116h1M93 380h1M111 359h1M11 252h1M130 56h1M30 92h1M147 268h1M314 200h1M199 478h1M109 81h1M58 275h1M415 37h1M381 74h1M407 476h1M44 245h1M415 6h1M40 402h1M55 327h1M378 301h1M2 325h1M245 128h1M360 198h1M243 529h1M214 168h1M346 250h1M122 137h1M104 38h1M10 459h1M233 492h1M218 151h1M149 106h1M295 320h1M211 19h1M52 485h1M235 511h1M369 56h1M195 25h1M32 466h1M227 484h1M194 148h1M20 377h1M203 356h1M130 456h1M215 381h1M113 447h1M369 367h1M151 368h1M272 208h1M328 347h1M163 458h1M265 236h1M403 149h1M213 428h1M372 24h1M61 140h1M318 233h1M390 161h1M123 245h1M302 350h1M77 98h1M341 362h1M256 352h1M368 330h1M350 112h1M338 124h1M209 60h1M396 210h1M354 203h1M310 87h1M18 448h1M73 370h1M347 409h1M13 7h1M317 363h1M214 289h1M79 180h1M365 210h1M152 355h1M129 485h1M259 487h1M341 34h1M200 284h1M377 303h1M37 454h1M171 387h1M7 339h1M301 176h1M215 139h1M310 144h1M4 500h1M47 278h1M241 394h1M168 267h1M215 307h1M190 510h1M105 513h1M335 169h1M418 331h1M283 34h1M113 326h1M192 288h1M339 452h1M265 370h1M217 317h1M88 272h1M244 247h1M290 472h1M389 86h1M143 95h1M55 350h1M67 75h1M83 23h1M378 194h1M274 496h1M217 412h1M14 293h1M48 306h1M419 311h1M205 412h1M6 335h1M31 225h1M365 41h1M61 118h1M298 502h1M401 229h1M126 282h1M13 59h1M170 49h1M76 40h1M238 48h1M415 214h1M400 509h1M354 504h1M35 280h1M289 96h1M404 361h1M402 282h1M83 423h1M321 494h1M183 32h1M96 117h1M245 261h1M5 189h1M392 218h1M44 404h1M102 394h1M390 404h1M107 103h1M223 169h1M400 27h1M59 400h1M256 400h1M190 67h1M184 242h1M59 489h1M115 202h1M54 10h1M220 122h1M373 37h1M407 405h1M156 282h1M174 15h1M104 181h1M238 369h1M347 239h1M95 92h1M130 72h1M412 225h1M93 534h1M283 361h1M208 255h1M327 201h1M75 413h1M329 265h1M377 281h1M350 477h1M350 194h1M154 183h1M333 300h1M106 457h1M2 191h1M13 452h1M244 367h1M262 221h1M45 144h1M317 342h1M215 352h1M145 232h1M205 101h1M368 424h1M192 108h1M400 49h1M198 424h1M226 315h1M106 271h1M140 88h1M73 290h1M196 7h1M406 45h1M378 455h1M122 508h1M181 527h1M291 390h1M180 98h1M137 13h1M53 507h1M40 90h1M271 186h1M264 294h1M370 28h1M45 451h1M171 298h1M73 187h1M318 383h1M122 25h1M358 73h1M117 176h1M282 318h1M81 436h1M95 7h1M108 216h1M212 127h1M382 51h1M229 219h1M84 471h1M96 401h1M371 433h1M414 1h1M72 358h1M151 438h1M223 185h1M154 511h1M292 442h1M418 414h1M354 373h1M402 486h1M374 445h1M169 134h1M352 251h1M247 456h1M225 189h1M198 100h1M213 366h1M70 322h1M249 129h1M276 443h1M280 339h1M377 528h1M65 264h1M115 219h1M185 397h1M272 59h1M96 435h1M234 390h1M324 281h1M172 184h1M417 401h1M312 265h1M14 450h1M103 165h1M97 340h1M248 78h1M272 127h1M58 521h1M292 407h1M308 10h1M393 198h1M300 118h1M69 409h1M96 84h1M296 445h1M103 11h1M230 318h1M249 444h1M183 86h1M8 228h1M238 73h1M24 80h1M85 25h1M148 212h1M37 120h1M386 115h1M377 430h1M118 502h1M235 14h1M71 121h1M40 278h1M353 175h1M401 521h1M286 362h1M175 522h1M231 215h1M343 280h1M318 242h1M181 426h1M24 116h1M1 154h1M257 394h1M183 181h1M194 498h1M247 357h1M207 356h1M420 164h1M410 437h1M128 96h1M105 20h1M284 221h1M272 410h1M121 212h1M11 494h1M111 17h1M131 312h1M281 160h1M367 77h1M399 205h1M289 237h1M96 259h1M281 240h1M312 414h1M310 53h1M78 430h1M293 249h1M289 271h1M19 418h1M166 28h1M320 354h1M105 362h1M338 320h1M304 246h1M95 82h1M270 57h1M280 420h1M154 387h1M221 376h1M210 359h1M239 373h1M236 435h1M336 47h1M186 38h1M341 206h1M217 178h1M388 112h1M410 244h1M148 154h1" stroke="#666666" stroke-width="1.25" fill="none"/><path d="M50 224h1M369 168h1M280 33h1M272 532h1M49 32h1M231 473h1M328 469h1M412 463h1M325 285h1M139 120h1M415 457h1M278 488h1M332 178h1M340 78h1M77 2h1M73 254h1M201 505h1M236 506h1M205 531h1M178 489h1M337 45h1M55 38h1M316 352h1M415 80h1M271 23h1M376 336h1M212 448h1M264 336h1M206 2h1M278 35h1M307 110h1M202 366h1M62 136h1M403 474h1M308 242h1M145 160h1M9 17h1M304 347h1M106 341h1M104 515h1M287 106h1M408 167h1M97 119h1M260 141h1M338 396h1M135 194h1M33 106h1M239 200h1M214 124h1M200 439h1M153 106h1M46 263h1M381 333h1M170 454h1M17 301h1M206 126h1M35 393h1M361 534h1M28 188h1M313 26h1M187 502h1M374 420h1M3 453h1M16 180h1M293 453h1M412 252h1M292 340h1M153 438h1M375 35h1M42 52h1M406 270h1M363 49h1M207 263h1M119 115h1M34 422h1M355 355h1M71 235h1M127 377h1M168 424h1M326 375h1M177 419h1M229 86h1M242 290h1M216 343h1M112 120h1M54 416h1M269 439h1M153 498h1M330 75h1M375 326h1M281 479h1M353 106h1M363 4h1M378 18h1M263 181h1M178 297h1M410 351h1M247 340h1M256 353h1M76 20h1M17 64h1M407 47h1M54 10h1M21 415h1M285 78h1M176 207h1M255 524h1M374 202h1M253 480h1M178 314h1M374 23h1M115 456h1M36 297h1M37 432h1M14 531h1M380 485h1M20 421h1M285 7h1M93 501h1M41 498h1M66 145h1M377 31h1M76 413h1M87 328h1M304 30h1M141 451h1M217 65h1M299 204h1M58 317h1M62 307h1M164 225h1M339 489h1M37 293h1M5 189h1M163 236h1M311 398h1M200 421h1M136 422h1M136 452h1M218 277h1M145 284h1M377 370h1M51 84h1M324 173h1M102 209h1M187 448h1M67 189h1M191 70h1M36 95h1M95 68h1M326 473h1M174 353h1M384 393h1M316 46h1M166 401h1M178 499h1M191 29h1M131 73h1M343 294h1M194 411h1M5 532h1M12 415h1M330 445h1M138 99h1M304 2h1M409 487h1M231 60h1M364 295h1M304 55h1M90 161h1M367 90h1M144 409h1M310 508h1M81 239h1M233 155h1M227 370h1M200 85h1M153 151h1M367 503h1M128 409h1M326 230h1M69 144h1M253 43h1M66 76h1M312 138h1M417 122h1M63 95h1M380 58h1M240 84h1M366 143h1M372 193h1M363 98h1M384 81h1M41 90h1M14 126h1M289 79h1M153 6h1M49 452h1M382 27h1M201 428h1M136 130h1M38 341h1M85 227h1M186 197h1M209 483h1M207 274h1M93 41h1M43 47h1M238 29h1M365 430h1M136 147h1M123 381h1M293 22h1M384 174h1M39 249h1M122 187h1M114 479h1M313 96h1M40 296h1M397 262h1M17 331h1M343 183h1M37 131h1M328 487h1M407 361h1M381 399h1M332 135h1M330 425h1M37 350h1M143 319h1M7 59h1M37 145h1M186 354h1M405 380h1M352 341h1M133 82h1M265 139h1M174 269h1M242 147h1M378 482h1M55 377h1M285 523h1M340 21h1M56 243h1M185 106h1M295 522h1M399 493h1M5 463h1M150 482h1M417 489h1M413 234h1M162 435h1M247 341h1M185 36h1M96 210h1M347 340h1M386 1h1M261 319h1M314 13h1M148 50h1M155 162h1M275 500h1M352 533h1M388 176h1M326 477h1M224 56h1M6 139h1M289 370h1M128 219h1M393 183h1M270 253h1M21 356h1M49 247h1M30 119h1M274 78h1M398 397h1M223 455h1M240 97h1M200 363h1M243 191h1M156 516h1M346 322h1M6 287h1M97 142h1M38 334h1M111 424h1M302 123h1M81 379h1M178 286h1M122 343h1M66 121h1M302 284h1M29 402h1M122 249h1M403 57h1M176 440h1M242 6h1M138 455h1M268 476h1M103 493h1M417 390h1M227 180h1M145 452h1M192 182h1M138 14h1M198 482h1M45 315h1M220 440h1M150 119h1M127 176h1M421 301h1M2 182h1M303 402h1M299 146h1M71 39h1M179 189h1M165 82h1M241 3h1M154 456h1M346 86h1M24 141h1M39 468h1M167 506h1M74 205h1M2 430h1M217 3h1M380 425h1M346 531h1M257 85h1M35 499h1M393 47h1M367 237h1M41 265h1M199 64h1M416 290h1M201 47h1M197 385h1M41 490h1M389 86h1M237 508h1M352 359h1M380 316h1M294 36h1M413 59h1M319 130h1M163 180h1M94 359h1M141 55h1M94 215h1M204 68h1M19 383h1M293 197h1M2 49h1M224 148h1M285 340h1M282 518h1M300 480h1M359 178h1M124 107h1M263 417h1M231 208h1M44 139h1M138 176h1M171 125h1M73 346h1M94 237h1M189 520h1M307 143h1M294 249h1M118 399h1M11 404h1M331 106h1M184 1h1M327 157h1M331 363h1M27 345h1M65 295h1M156 423h1M139 58h1M186 234h1M264 339h1M282 154h1M129 293h1M394 13h1M351 211h1M106 129h1M292 315h1M397 138h1M179 201h1M400 517h1M418 250h1M101 398h1M132 197h1M357 176h1M299 434h1M43 179h1M46 332h1M174 455h1M178 448h1M170 55h1M394 87h1M56 163h1M244 65h1M214 77h1M288 367h1M229 73h1M374 130h1M283 65h1M102 423h1M330 285h1M137 151h1M52 341h1M11 454h1M83 429h1M28 358h1M160 493h1M205 18h1M343 243h1M141 124h1M5 238h1M304 188h1M225 320h1M40 187h1M243 93h1M119 402h1M378 13h1M128 282h1M373 18h1M100 287h1M414 101h1M49 455h1M403 55h1M304 170h1M393 206h1M403 44h1M58 533h1M44 511h1M308 23h1M294 391h1M234 319h1M71 184h1M88 57h1M314 347h1M25 478h1M101 137h1M98 428h1M61 32h1M412 282h1M373 193h1M75 180h1M229 1h1M118 186h1M102 526h1M232 216h1M364 494h1M227 54h1M134 78h1M308 261h1M153 473h1M190 302h1M33 487h1M403 390h1M126 394h1M259 100h1M370 458h1M252 60h1M369 138h1M33 535h1M218 526h1M108 433h1M68 216h1M387 56h1M228 141h1M126 327h1M412 484h1M306 434h1M39 452h1M217 126h1M414 222h1M420 266h1M174 399h1M374 166h1M87 387h1M268 314h1M136 10h1M146 107h1M268 281h1M324 289h1M185 124h1M180 379h1M417 535h1M148 171h1M270 319h1M49 113h1M32 222h1M375 191h1M111 494h1M214 327h1M189 138h1M364 67h1M365 60h1M45 134h1M224 120h1M142 237h1M67 196h1M364 346h1M37 248h1M144 77h1M272 485h1M137 355h1M205 466h1M360 152h1M274 324h1M392 28h1M256 282h1M320 519h1M333 508h1M231 442h1M142 174h1M231 188h1M282 221h1M88 69h1M368 506h1M205 280h1M14 44h1M403 262h1M245 117h1M400 181h1M286 450h1M191 212h1M291 498h1M365 98h1M340 257h1M94 259h1M231 166h1M77 99h1M236 399h1M321 87h1M323 307h1M266 128h1M59 161h1M262 39h1M372 163h1M352 133h1M91 140h1M356 374h1M336 428h1M111 57h1M222 41h1M331 311h1M374 69h1M274 473h1M77 531h1M252 421h1M78 60h1M107 253h1M26 475h1M219 467h1M309 199h1M10 449h1M409 400h1M339 53h1M18 53h1M118 113h1M296 83h1M322 385h1M292 5h1M217 399h1M375 355h1M80 49h1M383 48h1M317 435h1M74 189h1M360 19h1M408 136h1M238 167h1M390 7h1M356 434h1M207 268h1M58 143h1M100 166h1M250 278h1M94 42h1M260 401h1M3 367h1M139 533h1M135 407h1M266 385h1M214 289h1M270 504h1M385 62h1M135 494h1M227 305h1M144 325h1M412 270h1M276 259h1M395 188h1M380 374h1M186 167h1M414 251h1M169 226h1M409 405h1M7 193h1M38 446h1M201 301h1M304 385h1M177 63h1M251 302h1M416 209h1M350 71h1M88 190h1M205 28h1M216 429h1M33 297h1M49 53h1M344 378h1M246 9h1M189 85h1M234 397h1M195 88h1M148 522h1M379 40h1M251 152h1M10 369h1M229 57h1M175 534h1M289 347h1M342 335h1M128 478h1M346 451h1M277 105h1M337 254h1M200 53h1M78 256h1M34 444h1M134 279h1M311 419h1M419 14h1M194 284h1M64 410h1M103 370h1M193 315h1M261 212h1M168 530h1M161 218h1M121 472h1M68 184h1M382 250h1M113 388h1M340 137h1M196 196h1M260 75h1M340 148h1M254 228h1M139 9h1M303 203h1M184 250h1M84 388h1M245 44h1M230 500h1M122 33h1M59 510h1M349 125h1M404 529h1M265 226h1M302 22h1M214 518h1M324 248h1M326 136h1M119 319h1M176 75h1M78 429h1M266 93h1M373 326h1M304 102h1M371 153h1M19 439h1M253 521h1M380 147h1M155 487h1M353 521h1M229 222h1M142 349h1M173 232h1M24 269h1M213 496h1M36 149h1M393 385h1M91 36h1M98 485h1M181 492h1M120 193h1M345 270h1M100 469h1M205 447h1M5 131h1M324 444h1M397 242h1M159 146h1M270 160h1M378 149h1M372 248h1M289 94h1M23 47h1M330 121h1M353 177h1M270 418h1M410 30h1" stroke="#8c8c8c" stroke-width="1.25" fill="none"/><path d="M94 336h1M242 282h1M151 474h1M155 304h1M285 29h1M394 530h1M53 81h1M393 233h1M282 420h1M109 80h1M143 296h1M348 313h1M60 281h1M390 382h1M266 490h1M109 305h1M402 455h1M0 210h1M220 366h1M329 125h1M166 481h1M308 535h1M139 99h1M15 34h1M108 401h1M143 146h1M200 513h1M119 165h1M86 3h1M119 279h1M104 389h1M207 513h1M70 423h1M77 86h1M268 193h1M234 311h1M99 399h1M314 175h1M138 128h1M350 140h1M169 212h1M87 141h1M211 203h1M307 55h1M96 387h1M220 220h1M24 444h1M17 387h1M3 102h1M393 136h1M84 402h1M98 311h1M328 228h1M323 439h1M61 405h1M82 19h1M412 30h1M78 233h1M208 8h1M26 468h1M69 443h1M221 212h1M408 416h1M267 434h1M46 121h1M385 68h1M176 420h1M245 47h1M238 267h1M105 24h1M360 169h1M404 266h1M93 166h1M119 216h1M333 113h1M118 48h1M180 274h1M217 239h1M148 160h1M345 378h1M280 443h1M126 184h1M48 97h1M165 92h1M367 302h1M160 77h1M64 269h1M236 413h1M395 182h1M29 260h1M83 393h1M79 288h1M117 281h1M173 493h1M38 182h1M91 519h1M291 527h1M258 142h1M270 444h1M420 438h1M337 107h1M249 244h1M353 78h1M277 138h1M349 65h1M63 50h1M54 129h1M57 444h1M347 420h1M100 264h1M375 327h1M166 268h1M0 94h1M188 403h1M137 73h1M59 277h1M161 518h1M79 166h1M219 359h1M346 348h1M383 381h1M87 130h1M45 422h1M257 348h1M308 427h1M370 96h1M9 124h1M395 218h1M89 154h1M359 70h1M237 466h1M361 59h1M96 321h1M315 313h1M192 121h1M101 65h1M190 219h1M279 461h1M337 482h1M81 41h1M273 97h1M33 312h1M348 384h1M64 499h1M188 497h1M312 478h1M255 482h1M370 75h1M169 430h1M130 339h1M153 195h1M293 67h1M338 117h1M281 77h1M212 482h1M402 274h1M389 28h1M77 62h1M163 194h1M303 488h1M307 219h1M206 147h1M156 493h1M364 215h1M331 134h1M195 441h1M373 197h1M350 54h1M191 270h1M229 531h1M340 156h1M18 190h1M419 171h1M408 345h1M66 151h1M143 224h1M363 109h1M117 493h1M335 151h1M192 105h1M94 116h1M184 361h1M43 450h1M395 447h1M157 530h1M105 366h1M202 221h1M319 25h1M280 148h1M402 418h1M235 415h1M167 294h1M346 116h1M197 489h1M390 256h1M176 92h1M146 419h1M114 474h1M236 137h1M130 7h1M305 184h1M139 72h1M256 53h1M322 252h1M142 213h1M145 518h1M84 293h1M179 522h1M88 79h1M388 260h1M217 301h1M6 468h1M199 478h1M177 134h1M303 177h1M129 331h1M110 235h1M167 415h1M332 374h1M275 191h1M215 96h1M37 177h1M335 427h1M216 400h1M153 147h1M340 371h1M202 149h1M420 287h1M107 14h1M243 501h1M8 223h1M242 78h1M417 493h1M326 497h1M364 339h1M86 439h1M353 464h1M32 188h1M185 309h1M141 19h1M21 88h1M351 503h1M390 120h1M230 191h1M352 483h1M269 307h1M214 255h1M69 379h1M282 183h1M31 269h1M360 37h1M31 41h1M39 195h1M214 513h1M366 308h1M120 100h1M288 213h1M276 289h1M251 296h1M39 289h1M119 251h1M355 92h1M377 195h1M282 155h1M289 250h1M338 533h1M411 139h1M201 114h1M404 201h1M195 390h1M79 93h1M131 400h1M163 90h1M335 63h1M379 194h1M237 481h1M418 191h1M207 243h1M43 361h1M353 359h1M388 34h1M393 355h1M112 141h1M150 417h1M2 19h1M161 365h1M120 361h1M56 327h1M348 493h1M418 165h1M159 482h1M264 523h1M126 410h1M259 218h1M148 470h1M171 364h1M128 176h1M252 26h1M319 259h1M62 386h1M256 462h1M205 270h1M240 507h1M289 89h1M283 70h1M76 247h1M237 400h1M159 360h1M356 53h1M186 383h1M37 10h1M291 304h1M225 29h1M150 238h1M165 184h1M228 145h1M144 295h1M149 325h1M294 219h1M104 441h1M78 289h1M92 517h1M59 221h1M347 438h1M327 17h1M367 153h1M104 388h1M49 468h1M300 426h1M325 120h1M285 323h1M239 152h1M351 166h1M385 188h1M324 307h1M349 514h1M2 208h1M113 332h1M42 144h1M325 215h1M135 188h1M408 533h1M206 354h1M297 348h1M66 511h1M294 292h1M122 242h1" stroke="#b8b8b8" stroke-width="1.25" fill="none"/><path d="M243 213h1M307 154h1M52 455h1M60 473h1M415 423h1M111 516h1M230 131h1M193 439h1M26 149h1M348 459h1M166 114h1M233 175h1M137 212h1M50 102h1M175 463h1M343 104h1M107 343h1M138 101h1M43 206h1M321 66h1M123 33h1M63 24h1M153 531h1M226 11h1M141 233h1M326 289h1M185 335h1M72 170h1M35 384h1M319 61h1M9 246h1M142 173h1M328 130h1M302 473h1M64 428h1M103 321h1M139 523h1M398 62h1M95 465h1M69 339h1M26 128h1M16 50h1M62 325h1M40 237h1M60 52h1M152 64h1M351 108h1M194 342h1M202 236h1M107 125h1M408 131h1M279 511h1M37 368h1M294 310h1M380 62h1M327 257h1M296 277h1M14 501h1M220 161h1M413 478h1M258 109h1M104 154h1M141 509h1M252 467h1M385 303h1M367 222h1M241 437h1M176 31h1M144 25h1M254 186h1M53 226h1M129 94h1M229 393h1M193 426h1M94 235h1M231 481h1M337 311h1M137 183h1M154 0h1M227 450h1M269 514h1M168 207h1M114 261h1M32 208h1M268 519h1M321 253h1M296 93h1M148 21h1M153 253h1M329 156h1M10 69h1M275 328h1M110 487h1M132 455h1M311 264h1M3 238h1M381 463h1M207 158h1M293 78h1M119 227h1M332 153h1M227 192h1M177 291h1M81 256h1M244 319h1M241 48h1M153 390h1M1 393h1M375 307h1M206 245h1M357 32h1M382 5h1M188 287h1M420 352h1M213 454h1M23 30h1M402 312h1M349 517h1M272 343h1M304 60h1M177 501h1M183 497h1M45 487h1M322 330h1M336 438h1M162 243h1M162 216h1M309 285h1M217 241h1M333 448h1" stroke="#e6e6e6" stroke-width="1.25" fill="none"/><circle cx="68.0" cy="10.8" r="1.2" fill="#f4f4f4"/><circle cx="129.0" cy="9.5" r="1.2" fill="#f4f4f4"/><circle cx="374.4" cy="17.0" r="2.0" fill="#f4f4f4"/><circle cx="107.0" cy="49.5" r="1.6" fill="#f4f4f4"/><circle cx="181.3" cy="72.6" r="1.2" fill="#f4f4f4"/><circle cx="169.0" cy="83.7" r="1.2" fill="#f4f4f4"/><circle cx="311.3" cy="138.0" r="1.7" fill="#f4f4f4"/><circle cx="317.8" cy="138.0" r="1.1" fill="#f4f4f4"/><circle cx="346.0" cy="132.0" r="1.2" fill="#f4f4f4"/><circle cx="384.0" cy="149.7" r="1.6" fill="#f4f4f4"/><circle cx="89.0" cy="155.9" r="1.3" fill="#f4f4f4"/><circle cx="218.7" cy="215.4" r="1.8" fill="#f4f4f4"/><circle cx="261.0" cy="230.7" r="1.2" fill="#f4f4f4"/><circle cx="99.6" cy="205.3" r="1.2" fill="#f4f4f4"/><circle cx="9.6" cy="182.5" r="1.1" fill="#f4f4f4"/><circle cx="138.0" cy="185.8" r="1.1" fill="#f4f4f4"/><circle cx="117.9" cy="171.0" r="1.1" fill="#f4f4f4"/><circle cx="291.8" cy="29.0" r="1.1" fill="#f4f4f4"/><circle cx="209.6" cy="41.4" r="1.0" fill="#f4f4f4"/><circle cx="379.7" cy="46.7" r="0.7788985566671783" fill="#f4f4f4"/><circle cx="280.9" cy="22.2" r="1.0189958756734239" fill="#f4f4f4"/><circle cx="88.8" cy="513.0" r="0.7951580865184875" fill="#f4f4f4"/><circle cx="246.3" cy="323.0" r="0.6400389597241062" fill="#f4f4f4"/><circle cx="213.1" cy="400.2" r="0.9552897201274837" fill="#f4f4f4"/><circle cx="307.8" cy="363.6" r="0.6576052336270526" fill="#f4f4f4"/><circle cx="172.8" cy="272.9" r="0.6182775547748489" fill="#f4f4f4"/><circle cx="320.8" cy="57.1" r="0.8539282079333228" fill="#f4f4f4"/><circle cx="113.8" cy="89.4" r="1.0286673460605182" fill="#f4f4f4"/><circle cx="260.4" cy="391.3" r="0.872911339792452" fill="#f4f4f4"/><circle cx="237.2" cy="465.5" r="0.628475427074728" fill="#f4f4f4"/><circle cx="160.1" cy="119.0" r="0.8684141699216292" fill="#f4f4f4"/><circle cx="166.7" cy="491.0" r="0.7049209110325876" fill="#f4f4f4"/><circle cx="114.7" cy="489.2" r="0.9244458422587745" fill="#f4f4f4"/><circle cx="181.1" cy="200.9" r="0.9302943954164732" fill="#f4f4f4"/><circle cx="64.7" cy="385.6" r="0.7020353992607731" fill="#f4f4f4"/><circle cx="337.6" cy="42.2" r="1.011389397182824" fill="#f4f4f4"/><circle cx="360.6" cy="15.9" r="0.6719231441875411" fill="#f4f4f4"/><circle cx="382.5" cy="437.1" r="0.7313567545870314" fill="#f4f4f4"/><circle cx="335.4" cy="310.4" r="0.711144425744999" fill="#f4f4f4"/><circle cx="288.4" cy="222.9" r="0.6638801551772855" fill="#f4f4f4"/><circle cx="356.2" cy="383.3" r="0.709683694666875" fill="#f4f4f4"/><circle cx="180.2" cy="364.9" r="0.7670571177933483" fill="#f4f4f4"/><circle cx="109.9" cy="282.0" r="1.0277304005237615" fill="#f4f4f4"/><circle cx="42.4" cy="136.5" r="0.8173934134351066" fill="#f4f4f4"/><circle cx="411.7" cy="529.1" r="0.6037750955958312" fill="#f4f4f4"/><circle cx="269.4" cy="76.2" r="0.6931464188777762" fill="#f4f4f4"/><circle cx="59.3" cy="267.9" r="1.047098983696523" fill="#f4f4f4"/><circle cx="403.8" cy="197.6" r="1.0042192011781816" fill="#f4f4f4"/><circle cx="289.0" cy="42.4" r="1.0054094287449036" fill="#f4f4f4"/><circle cx="116.5" cy="521.6" r="0.6594926129353595" fill="#f4f4f4"/><circle cx="376.5" cy="274.8" r="0.8318700826320384" fill="#f4f4f4"/><circle cx="78.9" cy="261.8" r="0.941775682465459" fill="#f4f4f4"/><circle cx="233.8" cy="522.5" r="0.840504141428417" fill="#f4f4f4"/><circle cx="378.2" cy="73.8" r="0.9315307755729003" fill="#f4f4f4"/><circle cx="251.9" cy="470.9" r="0.7511754180064218" fill="#f4f4f4"/><circle cx="195.1" cy="433.8" r="0.7150718321961052" fill="#f4f4f4"/><circle cx="157.2" cy="451.6" r="0.8918008354054812" fill="#f4f4f4"/><circle cx="206.1" cy="11.3" r="0.9437173396589313" fill="#f4f4f4"/><circle cx="175.2" cy="129.0" r="0.7736959338111085" fill="#f4f4f4"/><circle cx="60.0" cy="448.6" r="0.9587914000878555" fill="#f4f4f4"/><circle cx="403.8" cy="360.3" r="0.6725348030430928" fill="#f4f4f4"/><circle cx="178.4" cy="530.7" r="0.6004371229498293" fill="#f4f4f4"/><circle cx="145.0" cy="82.1" r="0.676834433503565" fill="#f4f4f4"/><circle cx="117.1" cy="331.1" r="0.6302971545503907" fill="#f4f4f4"/><circle cx="362.9" cy="231.0" r="0.677885142172294" fill="#f4f4f4"/><circle cx="45.0" cy="281.1" r="0.757147070462837" fill="#f4f4f4"/><circle cx="210.9" cy="60.2" r="0.7598279756272044" fill="#f4f4f4"/><circle cx="212.8" cy="47.6" r="0.8256643844329453" fill="#f4f4f4"/><circle cx="351.9" cy="315.6" r="0.6581400440712725" fill="#f4f4f4"/><circle cx="265.0" cy="46.9" r="0.6639023554615682" fill="#f4f4f4"/><circle cx="7.0" cy="284.1" r="0.6799171899223072" fill="#f4f4f4"/><circle cx="118.7" cy="66.9" r="1.002783264864373" fill="#f4f4f4"/><circle cx="63.3" cy="360.4" r="0.9628064875356787" fill="#f4f4f4"/><circle cx="189.5" cy="311.8" r="0.749951406550152" fill="#f4f4f4"/><circle cx="342.7" cy="366.4" r="0.6350394032114522" fill="#f4f4f4"/><circle cx="295.1" cy="77.6" r="0.8164494037225865" fill="#f4f4f4"/><circle cx="79.1" cy="259.7" r="0.8948321587636086" fill="#f4f4f4"/><circle cx="307.3" cy="175.5" r="0.6246064381799723" fill="#f4f4f4"/><circle cx="189.9" cy="487.7" r="0.8483925605434106" fill="#f4f4f4"/><circle cx="260.1" cy="408.8" r="0.8871112195540478" fill="#f4f4f4"/><circle cx="396.8" cy="509.0" r="0.9323659820323307" fill="#f4f4f4"/><circle cx="338.0" cy="78.2" r="0.7190948635456059" fill="#f4f4f4"/><circle cx="298.0" cy="310.6" r="0.9879351116128443" fill="#f4f4f4"/><circle cx="324.2" cy="178.6" r="0.6771017745155897" fill="#f4f4f4"/><circle cx="275.9" cy="61.8" r="0.8227201139767366" fill="#f4f4f4"/><circle cx="117.4" cy="215.6" r="0.8943234621832239" fill="#f4f4f4"/><circle cx="265.9" cy="330.3" r="0.6272322992127415" fill="#f4f4f4"/><circle cx="374.0" cy="376.6" r="1.008181727233619" fill="#f4f4f4"/><circle cx="257.2" cy="345.6" r="0.9997436442645729" fill="#f4f4f4"/></svg><div style="left:191px;top:645px;width:498px;height:1.5px;background:#333;"></div><div style="left:689px;top:0px;width:4px;height:700px;background:#d4d0c8;border-left:1px solid #fff;border-right:1px solid #808080;"></div><div class="t" style="font-size:11px;line-height:11px;color:#000;left:193.4px;top:655.9px;transform:scaleX(1.006);transform-origin:0 0;">Screen X: - Y: -</div><div style="left:317px;top:651px;width:1px;height:17px;background:#a09c90;box-shadow:1px 0 #fff;"></div><div class="t" style="font-size:11px;line-height:11px;color:#000;left:323px;top:655.9px;transform:scaleX(1.032);transform-origin:0 0;">Image X: - Y: -</div><div style="left:0px;top:671.5px;width:693px;height:1px;background:#fff;"></div><div style="left:0px;top:677.3px;width:115.6px;height:15.3px;background:#d4d0c8;box-shadow:inset -1px -1px #fff,inset 1px 1px #808080;"></div><div style="left:0px;top:679.2px;width:92px;height:12px;background:#0a246a;"></div><div class="t" style="font-size:11px;line-height:11px;color:#000;left:119.5px;top:680.3px;transform:scaleX(1.040);transform-origin:0 0;">Integrating Pacman; Event 2; Frame 3 for 600s (86s)</div><div style="left:0px;top:697px;width:693px;height:3px;background:#d4d0c8;border-bottom:1px solid #808080;"></div><div class="win" style="left:-3px;top:286px;width:194px;height:95.5px;"></div><div style="left:0px;top:287px;width:189.5px;height:14.7px;background:linear-gradient(90deg,#979797 0%,#a0a0a0 35%,#bcbcbc 72%,#a6a6a6 100%);"></div><div class="t" style="font-size:11.5px;line-height:11.5px;color:#ececec;font-weight:bold;left:0px;top:289.6px;">Box</div><div style="left:177px;top:289px;width:10px;height:10px;background:#d4d0c8;box-shadow:inset -1px -1px #404040,inset 1px 1px #fff;"></div><svg style="left:177px;top:289px;" width="10" height="10" viewBox="0 0 10 10"><path d="M2 2l5.5 5.5M7.5 2L2 7.5" stroke="#000" stroke-width="1.1"/></svg><div class="grp" style="left:-3px;top:309.3px;width:190px;height:67px;"></div><div class="t" style="font-size:11px;line-height:11px;color:#000;left:1.4px;top:319.5px;transform:scaleX(0.955);transform-origin:0 0;">Brightness:</div><div style="left:60px;top:322px;width:117px;height:2px;background:#5a5a5a;box-shadow:0 1px #fff;"></div><svg style="left:59px;top:314.5px;" width="11" height="20" viewBox="0 0 11 20"><path d="M.500 .500h10v14.500l-5 4.500-5-4.500z" fill="#d4d0c8" stroke="#808080"/><path d="M1 15V1h9" stroke="#fff" fill="none"/><path d="M10.500 .500v14.500l-5 4.500" stroke="#404040" fill="none"/></svg><div class="t" style="font-size:11px;line-height:11px;color:#000;left:54px;width:20px;text-align:center;top:337px;">0</div><div class="t" style="font-size:11px;line-height:11px;color:#000;left:107px;width:20px;text-align:center;top:337px;">0</div><div class="t" style="font-size:11px;line-height:11px;color:#000;left:158px;width:20px;text-align:center;top:337px;">0</div><div class="t" style="font-size:11px;line-height:11px;color:#000;left:1.4px;top:358.5px;transform:scaleX(0.970);transform-origin:0 0;">Shutter:</div><div style="left:56.7px;top:356.8px;width:12px;height:12px;border-radius:50%;background:#d4d0c8;border:1px solid #808080;box-shadow:inset 1px 1px #404040,1px 1px #fff;"></div><div style="left:60.7px;top:360.8px;width:4px;height:4px;border-radius:50%;background:#808080;"></div><div class="t" style="font-size:11px;line-height:11px;color:#8c8c8c;left:76.7px;top:358.5px;transform:scaleX(0.988);transform-origin:0 0;text-shadow:1px 1px 0 #fff;">Open</div><div style="left:125px;top:356.8px;width:12px;height:12px;border-radius:50%;background:#d4d0c8;border:1px solid #808080;box-shadow:inset 1px 1px #404040,1px 1px #fff;"></div><div class="t" style="font-size:11px;line-height:11px;color:#8c8c8c;left:144.4px;top:358.5px;transform:scaleX(0.960);transform-origin:0 0;text-shadow:1px 1px 0 #fff;">Closed</div><div style="left:184.3px;top:381px;width:5.2px;height:290px;background:#909090;"></div><div style="left:177px;top:382px;width:1px;height:121px;background:#8a8a8a;"></div><div style="left:-2px;top:385.4px;width:175px;height:65px;background:#a9a9a9;border:1px solid #222;"></div><svg style="left:0px;top:385.4px;" width="167" height="65" viewBox="0 0 167 65"><path d="M0 1.4H167" stroke="#d8d8d8" stroke-width="1" stroke-dasharray="2 2"/><path d="M0 16.6H167" stroke="#d8d8d8" stroke-width="1" stroke-dasharray="2 2"/><path d="M0 47.1H167" stroke="#d8d8d8" stroke-width="1" stroke-dasharray="2 2"/><path d="M0 62.6H167" stroke="#d8d8d8" stroke-width="1" stroke-dasharray="2 2"/><path d="M0 32H167" stroke="#000" stroke-width="1"/><polyline points="0.0 27.0 2.9 27.2 6.0 31.4 7.6 22.5 10.0 37.7 13.0 29.9 14.8 28.9 17.3 32.6 19.8 34.9 21.8 32.2 24.9 32.2 27.8 29.5 29.6 30.4 31.2 30.5 34.2 32.7 37.4 34.8 40.4 29.4 42.8 42.4 45.5 34.8 48.2 41.6 51.4 34.8 53.5 29.8 55.4 32.9 57.5 33.2 60.0 38.3 62.2 32.1 64.3 34.0 66.4 27.6 68.8 31.6 71.9 30.6 73.6 32.0 75.2 23.9 78.0 28.3 79.7 36.1 81.3 36.4 83.2 41.5 86.1 41.1 88.2 27.7 90.4 24.8 92.1 30.9 94.9 34.4 96.6 24.0 99.7 35.2 102.3 34.1 105.4 26.9 107.8 40.1 109.9 30.9 111.7 34.4 113.5 26.7 115.4 18.8 117.0 37.2 119.3 31.6 121.3 25.5 123.6 27.6 125.9 40.8 127.5 35.2 129.9 33.2 132.7 30.1 135.8 26.9 137.6 26.6 139.9 36.8 141.9 38.5 144.3 40.2 147.4 32.0 149.8 25.2 152.1 32.5 154.2 30.1 156.4 33.3 159.6 37.7 162.0 30.5 164.1 34.8 167.0 33.8" fill="none" stroke="#1818e8" stroke-width="1.200"/><polyline points="0.0 28.9 1.8 32.7 4.8 35.9 7.8 32.2 9.6 27.7 11.2 30.5 13.4 31.0 16.2 28.5 18.1 32.1 20.5 33.6 23.5 27.2 25.8 28.9 28.6 34.2 31.2 33.6 34.0 30.8 36.0 32.7 38.0 30.8 39.9 37.9 42.9 32.8 45.1 31.2 47.5 35.4 50.5 32.5 52.3 30.6 54.8 31.0 57.9 32.1 59.6 32.4 62.1 33.4 64.5 32.2 67.5 29.1 70.2 33.6 71.9 30.2 74.5 31.0 77.6 36.0 80.2 33.4 82.0 30.8 85.2 42.6 87.0 29.8 89.0 24.2 91.6 35.0 94.3 32.8 96.8 32.2 99.0 30.6 101.9 28.9 104.2 30.2 107.4 31.4 110.2 31.7 112.4 29.9 114.7 32.9 116.8 35.9 118.6 34.5 121.4 37.7 124.3 32.9 126.7 31.4 129.5 29.6 131.8 33.0 134.0 40.5 136.2 34.0 138.9 29.6 140.7 33.4 142.4 29.9 145.6 35.7 148.8 39.1 151.3 33.2 153.3 32.1 155.5 25.4 157.7 26.5 159.5 30.3 161.2 31.3 163.7 31.6 166.0 30.9" fill="none" stroke="#e81818" stroke-width="1.200"/></svg><div class="t" style="font-size:9px;line-height:9px;color:#e00000;font-weight:bold;left:5.6px;top:388.9px;transform:scaleX(1.040);transform-origin:0 0;">Dec</div><div class="btn" style="left:-3px;top:454.2px;width:72.7px;height:22.3px;"></div><svg style="left:-8px;top:458.5px;" width="14" height="14" viewBox="0 0 14 14"><circle cx="7" cy="7" r="6" fill="none" stroke="#222" stroke-width="1.300"/><path d="M1 7h12M7 1v12" stroke="#222"/></svg><div class="t" style="font-size:11px;line-height:11px;color:#000;left:9px;top:461px;transform:scaleX(1.070);transform-origin:0 0;">RA/Dec</div><div class="btn" style="left:77.2px;top:454.2px;width:95.6px;height:22.3px;"></div><svg style="left:106px;top:460px;" width="14" height="10" viewBox="0 0 14 10"><path d="M1 0v10M12.500 0v10" stroke="#555" stroke-width="1.200"/><path d="M3 5l3-2.500v5zM10.500 5l-3-2.500v5z" fill="#e8a020"/></svg><div class="t" style="font-size:11px;line-height:11px;color:#000;left:123px;top:461px;transform:scaleX(1.005);transform-origin:0 0;">100</div><div class="btn" style="left:-3px;top:480px;width:72.7px;height:22px;"></div><svg style="left:0px;top:484px;" width="14" height="14" viewBox="0 0 14 14"><rect x=".5" y=".5" width="13" height="13" fill="none" stroke="#222" stroke-dasharray="2 1.500"/><path d="M3.500 3.500l7 7M10.500 3.500l-7 7" stroke="#e8a020" stroke-width="2.200"/></svg><div class="t" style="font-size:11px;line-height:11px;color:#000;left:17px;top:487px;transform:scaleX(0.959);transform-origin:0 0;">Clear</div><div class="btn" style="left:77.2px;top:480px;width:45.5px;height:22px;"></div><svg style="left:93px;top:484px;" width="14" height="14" viewBox="0 0 14 14"><g transform="rotate(-45 7 7)" fill="none" stroke="#222" stroke-width="1.800"><rect x="-.500" y="4.500" width="7.500" height="5" rx="2.500"/><rect x="7" y="4.500" width="7.500" height="5" rx="2.500"/><path d="M5 7h4"/></g></svg><div class="btn" style="left:127px;top:480px;width:45.8px;height:22px;"></div><svg style="left:143px;top:484px;" width="14" height="14" viewBox="0 0 14 14"><circle cx="4.500" cy="9.500" r="2.600" fill="none" stroke="#222" stroke-width="1.600"/><path d="M7 5.500a2.500 2.500 0 1 1 4 0v2" fill="none" stroke="#222" stroke-width="1.500"/><path d="M9 10l3-1M9.500 12l3 1" stroke="#e8a020" stroke-width="1.300"/></svg><div style="left:-2px;top:503px;width:186px;height:4.5px;background:#8e8e8e;"></div><div style="left:-2px;top:507px;width:186px;height:16.5px;background:#bcbcbc;"></div><div class="t" style="font-size:11px;line-height:11px;color:#d0d0d0;left:-0.5px;top:511px;transform:scaleX(0.894);transform-origin:0 0;">ence</div><div style="left:152.5px;top:514.5px;width:0;height:0;border-left:4px solid transparent;border-right:4px solid transparent;border-top:4px solid #d4d4d4;"></div><svg style="left:169px;top:511.5px;" width="9" height="9" viewBox="0 0 9 9"><path d="M1 1l7 7M8 1L1 8" stroke="#d8d8d8" stroke-width="1.400"/></svg><div style="left:-2px;top:523.5px;width:186px;height:147px;background:#d4d0c8;"></div><div class="grp" style="left:-5px;top:529.3px;width:183px;height:127.2px;"></div><div style="left:-1px;top:525px;width:25px;height:10px;background:#d4d0c8;"></div><div class="t" style="font-size:11px;line-height:11px;color:#000;left:0px;top:526.7px;transform:scaleX(0.902);transform-origin:0 0;">mary</div><div class="t" style="font-size:11.5px;line-height:11.5px;color:#000;font-weight:bold;left:23px;width:100px;text-align:center;top:544.1px;transform:scaleX(1.185);transform-origin:50% 0;">Pacman</div><svg style="left:-22px;top:554px;" width="212" height="88" viewBox="0 0 212 88"><circle cx="42.7" cy="43.299999999999955" r="32.5" fill="none" stroke="#858585" stroke-width="15"/><path d="M42.7 10.799999999999955A32.5 32.5 0 0 1 74.62 37.21" fill="none" stroke="#19b432" stroke-width="15"/><circle cx="148" cy="43.299999999999955" r="32.5" fill="none" stroke="#858585" stroke-width="15"/><path d="M148 10.799999999999955A32.5 32.5 0 0 1 179.92 37.21" fill="none" stroke="#19b432" stroke-width="15"/></svg><div class="t" style="font-size:12.5px;line-height:12.5px;color:#000;font-weight:bold;left:-9.8px;width:60px;text-align:center;top:592.2px;transform:scaleX(1.083);transform-origin:50% 0;">22%</div><div class="t" style="font-size:10.5px;line-height:10.5px;color:#000;left:-18.5px;width:80px;text-align:center;top:641.7px;transform:scaleX(1.035);transform-origin:50% 0;">(02:51:25)</div><div class="t" style="font-size:12.5px;line-height:12.5px;color:#000;font-weight:bold;left:95.5px;width:60px;text-align:center;top:592.2px;transform:scaleX(1.083);transform-origin:50% 0;">22%</div><div class="t" style="font-size:10.5px;line-height:10.5px;color:#000;left:86.8px;width:80px;text-align:center;top:641.7px;transform:scaleX(1.035);transform-origin:50% 0;">(02:51:25)</div><div style="left:-2px;top:652px;width:186px;height:18.5px;background:#d4d0c8;border-top:1px solid #a09c90;"></div><div class="t" style="font-size:11px;line-height:11px;color:#333;left:0px;top:656.5px;">n an...</div><div style="left:38px;top:654px;width:1px;height:15px;background:#8c887c;"></div><svg style="left:42px;top:655px;" width="13" height="14" viewBox="0 0 13 14"><path d="M1 4.500l3 3L11 .500" stroke="#e8a020" stroke-width="2.200" fill="none"/><path d="M1 9.500l3 3 7-7" stroke="#222" stroke-width="2.200" fill="none"/></svg><div class="t" style="font-size:11px;line-height:11px;color:#333;left:62.5px;top:656.5px;transform:scaleX(1.056);transform-origin:0 0;letter-spacing:.3px;">View ...</div><div style="left:111px;top:654px;width:1px;height:15px;background:#8c887c;"></div><svg style="left:116px;top:656px;" width="11" height="12" viewBox="0 0 11 12"><path d="M.500 .500l10 5.500-10 5.500z" fill="#222"/></svg><div class="t" style="font-size:11px;line-height:11px;color:#111;left:134px;top:656.5px;transform:scaleX(1.001);transform-origin:0 0;letter-spacing:.3px;">Seque...</div><div class="win" style="left:0px;top:141.3px;width:221px;height:145.2px;"></div><div style="left:0px;top:143.5px;width:218px;height:15.3px;background:linear-gradient(90deg,#979797 0%,#a0a0a0 35%,#bcbcbc 72%,#a6a6a6 100%);"></div><div class="t" style="font-size:11.5px;line-height:11.5px;color:#ececec;font-weight:bold;left:3px;top:146.6px;">Frame and Focus</div><div style="left:206px;top:146px;width:10px;height:10px;background:#d4d0c8;box-shadow:inset -1px -1px #404040,inset 1px 1px #fff;"></div><svg style="left:206px;top:146px;" width="10" height="10" viewBox="0 0 10 10"><path d="M2 2l5.5 5.5M7.5 2L2 7.5" stroke="#000" stroke-width="1.1"/></svg><div class="grp" style="left:5.9px;top:166.5px;width:210.1px;height:112px;"></div><svg style="left:13px;top:176px;" width="16" height="13" viewBox="0 0 16 13"><rect x=".5" y=".5" width="15" height="12" fill="#f4d9a0" stroke="#333"/><path d="M0 4.500h16M0 8.500h16M4 0v13M8 0v13M12 0v13" stroke="#e8a020" stroke-width="1.200" stroke-dasharray="1.500 1"/></svg><div class="fld" style="left:32.7px;top:173.7px;width:69px;height:19.5px;"></div><div class="t" style="font-size:11px;line-height:11px;color:#000;left:36.7px;top:178.9px;transform:scaleX(0.897);transform-origin:0 0;">1x1</div><div class="btn" style="left:82.7px;top:175.7px;width:17px;height:15.5px;"></div><div style="left:87.2px;top:181.9px;width:0;height:0;border-left:4px solid transparent;border-right:4px solid transparent;border-top:4px solid #000;"></div><svg style="left:115.5px;top:174px;" width="15" height="17" viewBox="0 0 15 17"><circle cx="7.500" cy="10" r="5.800" fill="none" stroke="#333" stroke-width="1.500"/><path d="M5.500 1.500h4M7.500 1.500v3" stroke="#333" stroke-width="1.500"/><circle cx="7.500" cy="10" r="1.400" fill="#e8a020"/><path d="M7.500 10V6.500" stroke="#e8a020" stroke-width="1.200"/></svg><div class="fld" style="left:135.8px;top:174.7px;width:67px;height:18px;"></div><div class="t" style="font-size:11px;line-height:11px;color:#000;left:139.8px;top:179.1px;transform:scaleX(1.008);transform-origin:0 0;">5,000</div><div class="btn" style="left:185.8px;top:176.7px;width:15px;height:7px;"></div><div class="btn" style="left:185.8px;top:183.7px;width:15px;height:7px;"></div><div style="left:190.8px;top:178.9px;width:0;height:0;border-left:2.5px solid transparent;border-right:2.5px solid transparent;border-bottom:2.5px solid #000;"></div><div style="left:190.8px;top:185.9px;width:0;height:0;border-left:2.5px solid transparent;border-right:2.5px solid transparent;border-top:2.5px solid #000;"></div><div class="t" style="font-size:11px;line-height:11px;color:#000;left:207.5px;top:179.5px;">s</div><div style="left:12px;top:198.5px;width:200px;height:9px;background:#d4d0c8;box-shadow:inset 1px 1px #808080,inset -1px -1px #fff;"></div><div class="btn" style="left:11px;top:212.3px;width:98.7px;height:23.2px;"></div><svg style="left:25.5px;top:216.5px;" width="16" height="16" viewBox="0 0 16 16"><circle cx="8" cy="8" r="7" fill="#c4c0b8" stroke="#8a8a8a" stroke-width="1.400"/><path d="M6.500 6l2-1.500V12" stroke="#8a8a8a" stroke-width="1.600" fill="none"/></svg><div class="t" style="font-size:11px;line-height:11px;color:#8c8c8c;left:44.5px;top:219.2px;transform:scaleX(1.035);transform-origin:0 0;text-shadow:1px 1px 0 #fff;">Take One</div><div class="btn" style="left:114px;top:212.3px;width:99px;height:23.2px;"></div><svg style="left:141px;top:216.5px;" width="16" height="16" viewBox="0 0 16 16"><path d="M13.500 8a5.500 5.500 0 1 1-2-4.300" fill="none" stroke="#8a8a8a" stroke-width="2"/><path d="M10 8.500l6 .5-3 4z" fill="#8a8a8a"/><path d="M8 5v3.500l2 1.500" stroke="#8a8a8a" stroke-width="1" fill="none"/></svg><div class="t" style="font-size:11px;line-height:11px;color:#8c8c8c;left:160.5px;top:219.2px;transform:scaleX(0.979);transform-origin:0 0;text-shadow:1px 1px 0 #fff;">Start</div><svg style="left:11.5px;top:237.7px;" width="16.5" height="16.5" viewBox="0 0 20 20"><circle cx="10" cy="10" r="6.200" fill="none" stroke="#2a2a2a" stroke-width="1.800"/><circle cx="10" cy="10" r="2.600" fill="none" stroke="#2a2a2a" stroke-width="1.700"/><path d="M10 1v6M10 13v6M1 10h6M13 10h6" stroke="#2a2a2a" stroke-width="1.700"/></svg><div class="chk" style="left:29.8px;top:240.4px;width:12px;height:12px;"></div><div class="t" style="font-size:11px;line-height:11px;color:#000;left:49.7px;top:243.3px;transform:scaleX(0.930);transform-origin:0 0;">Crosshairs</div><div class="chk" style="left:116.5px;top:240.4px;width:12px;height:12px;"></div><div class="t" style="font-size:11px;line-height:11px;color:#000;left:136.4px;top:243.3px;transform:scaleX(0.973);transform-origin:0 0;">Use subframe</div><svg style="left:13.5px;top:258.5px;" width="13" height="12" viewBox="0 0 13 12"><path d="M0 0h13v12H0z" fill="#222"/><rect x="3" y="0" width="7" height="3.500" fill="#e8a020"/><rect x="3" y="7" width="7" height="5" fill="#d4d0c8"/><rect x="7" y="8" width="2" height="4" fill="#222"/></svg><div class="chk" style="left:29.8px;top:259px;width:12px;height:12px;"></div><div class="t" style="font-size:11px;line-height:11px;color:#000;left:49.7px;top:261.2px;transform:scaleX(1.007);transform-origin:0 0;">Save to disk</div><div style="left:0px;top:131px;width:170px;height:11px;background:#000;"></div><div style="left:184.2px;top:131px;width:5px;height:11px;background:#8a8a8a;"></div><div style="left:177.5px;top:131px;width:1px;height:11px;background:#fff;"></div><div style="left:190.8px;top:131px;width:1.2px;height:11px;background:#2a2a2a;"></div><div class="win" style="left:1.9px;top:35.7px;width:220.7px;height:95.1px;"></div><div style="left:4.5px;top:38.3px;width:215.5px;height:14.4px;background:linear-gradient(90deg,#979797 0%,#a0a0a0 35%,#bcbcbc 72%,#a6a6a6 100%);"></div><div class="t" style="font-size:12px;line-height:12px;color:#ececec;font-weight:bold;left:5.7px;top:40.4px;transform:scaleX(1.006);transform-origin:0 0;">Filter Wheel</div><div style="left:208px;top:40.2px;width:10px;height:10px;background:#d4d0c8;box-shadow:inset -1px -1px #404040,inset 1px 1px #fff;"></div><svg style="left:208px;top:40.2px;" width="10" height="10" viewBox="0 0 10 10"><path d="M2 2l5.5 5.5M7.5 2L2 7.5" stroke="#000" stroke-width="1.1"/></svg><div class="grp" style="left:8.3px;top:60.6px;width:209.2px;height:64.8px;"></div><svg style="left:15.5px;top:65.5px;" width="15" height="15" viewBox="0 0 15 15"><circle cx="7.5" cy="7.5" r="6.3" fill="#e8a020" stroke="#7a6a40" stroke-width="1"/><circle cx="7.5" cy="7.5" r="4.8" fill="none" stroke="#ffd27a" stroke-width=".8"/></svg><div class="t" style="font-size:11px;line-height:11px;color:#000;left:33.7px;top:68.4px;transform:scaleX(0.938);transform-origin:0 0;">Current filter:</div><div class="t" style="font-size:11.5px;line-height:11.5px;color:#000;font-weight:bold;left:100.7px;top:68.6px;transform:scaleX(1.065);transform-origin:0 0;">SII</div><div class="t" style="font-size:11px;line-height:11px;color:#000;left:15.5px;top:85px;transform:scaleX(0.971);transform-origin:0 0;">Set filter position:</div><div class="fld" style="left:15.3px;top:99.5px;width:90.6px;height:18.5px;"></div><div class="t" style="font-size:11px;line-height:11px;color:#000;left:19.3px;top:104.2px;">Ha</div><div class="btn" style="left:86.9px;top:101.5px;width:17px;height:14.5px;"></div><div style="left:91.4px;top:107.2px;width:0;height:0;border-left:4px solid transparent;border-right:4px solid transparent;border-top:4px solid #000;"></div><div style="left:112.2px;top:98.2px;width:42.4px;height:22.4px;background:#000;"></div><div class="btn" style="left:113.2px;top:99.2px;width:40.4px;height:20.4px;"></div><div class="t" style="font-size:11px;line-height:11px;color:#000;left:113.5px;width:40px;text-align:center;top:104.8px;">Set</div><svg style="left:162px;top:67px;" width="51" height="51" viewBox="0 0 51 51"><defs><radialGradient id="s2a" cx=".42" cy=".3" r=".8"><stop offset="0" stop-color="#808080"/><stop offset=".5" stop-color="#444"/><stop offset="1" stop-color="#1c1c1c"/></radialGradient><radialGradient id="s2b" cx=".5" cy=".5" r=".5"><stop offset=".86" stop-color="#555"/><stop offset="1" stop-color="#b8b4ac" stop-opacity="0"/></radialGradient></defs><circle cx="25.300" cy="25.700" r="25" fill="url(#s2b)"/><circle cx="25.200" cy="25.500" r="23.200" fill="#060606"/><circle cx="25.200" cy="25.500" r="19" fill="url(#s2a)"/><path d="M10.500 33a16.500 16.500 0 0 0 29.500 0a18 18 0 0 1-29.500 0z" fill="#9a9a9a" opacity=".55"/><text x="25.500" y="30.500" text-anchor="middle" font-family="Liberation Sans,sans-serif" font-weight="bold" font-size="13.500" fill="#e6e6e6">S2</text></svg><div style="left:0px;top:700px;width:321px;height:161px;background:#000;"></div><div style="left:0px;top:700px;width:5px;height:22px;background:#8a4a20;"></div><div class="t" style="font-size:11px;line-height:11px;color:#fff;left:-3.5px;top:728.1px;">ED</div><svg style="left:37px;top:700px;" width="46" height="22" viewBox="0 0 46 22"><ellipse cx="28" cy="4" rx="19" ry="14" fill="#8c8478"/><path d="M14 -2l22 4-6 12-22-6z" fill="#5a8a6a"/><rect x="0" y="7" width="15" height="14" fill="#fff" stroke="#888" stroke-width=".500"/><path d="M4 17c0-5 3-6 7-6M8 8.500l3.500 2.500-3.500 3" stroke="#2060c0" stroke-width="2" fill="none"/></svg><div class="t" style="font-size:11px;line-height:11px;color:#fff;left:10.6px;width:100px;text-align:center;top:728.1px;transform:scaleX(0.994);transform-origin:50% 0;">SharpCap 2.9</div><svg style="left:120px;top:700px;" width="31" height="22" viewBox="0 0 31 22"><path d="M0 0h11l3 2v14l-8 5-6-4z" fill="#e9d27e"/><path d="M7 22V0h23v14z" fill="#f0dc90"/><rect x="27" y="8" width="2" height="6" fill="#f8f8f8"/></svg><div class="t" style="font-size:11px;line-height:11px;color:#fff;left:89.8px;width:100px;text-align:center;top:728.1px;transform:scaleX(1.005);transform-origin:50% 0;">focus logg</div><svg style="left:285px;top:700px;" width="33" height="22" viewBox="0 0 33 22"><rect x=".500" y="-1" width="32" height="22" fill="#f4f6fa" stroke="#a8b0bc"/><path d="M2 3.500h29M2 6.500h29M2 9.500h29M2 12.500h29M2 15.500h29M2 18.500h29" stroke="#c4cad8"/></svg><div style="left:262px;top:724px;width:59px;height:16px;overflow:hidden;"><div class="t" style="font-size:11px;line-height:11px;color:#fff;left:0.5px;top:4.1px;">park unpark</div></div><div style="left:0px;top:780px;width:5px;height:46px;background:linear-gradient(#222,#8a3a10 60%,#c05a10);"></div><div class="t" style="font-size:11px;line-height:11px;color:#fff;font-weight:bold;left:0px;top:780.5px;">d</div><div class="t" style="font-size:11px;line-height:11px;color:#fff;left:0px;top:844.5px;">2)</div><svg style="left:39.5px;top:779.5px;" width="31" height="46" viewBox="0 0 31 46"><defs><linearGradient id="fg" x1="0" x2="1"><stop offset="0" stop-color="#f7e9a8"/><stop offset="1" stop-color="#e6c96a"/></linearGradient></defs><path d="M1 3l9-3 5 4v38l-8 3-6-3z" fill="#e9d27e"/><path d="M7 45V9l17-5 6 2v33z" fill="url(#fg)" stroke="#c9a94e" stroke-width=".6"/><rect x="27.500" y="27" width="2" height="7" fill="#f8f8f8" stroke="#999" stroke-width=".4"/></svg><div class="t" style="font-size:11px;line-height:11px;color:#fff;left:10px;width:100px;text-align:center;top:831.5px;transform:scaleX(0.964);transform-origin:50% 0;">SharpCap</div><div class="t" style="font-size:11px;line-height:11px;color:#fff;left:10px;width:100px;text-align:center;top:844.5px;transform:scaleX(1.008);transform-origin:50% 0;">Captures</div><svg style="left:124.5px;top:783px;" width="33" height="43" viewBox="0 0 33 43"><path d="M.500 .500h24l8 8v34H.500z" fill="#f4f6fa" stroke="#a8b0bc" stroke-width="1"/><path d="M24.500 .500v8h8" fill="#d8dce4" stroke="#a8b0bc" stroke-width=".8"/><path d="M2 11.500h29" stroke="#c4cad8" stroke-width="1"/><path d="M2 14.500h29" stroke="#c4cad8" stroke-width="1"/><path d="M2 17.500h29" stroke="#c4cad8" stroke-width="1"/><path d="M2 20.500h29" stroke="#c4cad8" stroke-width="1"/><path d="M2 23.500h29" stroke="#c4cad8" stroke-width="1"/><path d="M2 26.500h29" stroke="#c4cad8" stroke-width="1"/><path d="M2 29.500h29" stroke="#c4cad8" stroke-width="1"/><path d="M2 32.500h29" stroke="#c4cad8" stroke-width="1"/><path d="M2 35.500h29" stroke="#c4cad8" stroke-width="1"/><path d="M2 38.500h29" stroke="#c4cad8" stroke-width="1"/><circle cx="4" cy="4" r="1.200" fill="none" stroke="#aaa" stroke-width=".600"/><circle cx="9" cy="4" r="1.200" fill="none" stroke="#aaa" stroke-width=".600"/><circle cx="14" cy="4" r="1.200" fill="none" stroke="#aaa" stroke-width=".600"/><circle cx="19" cy="4" r="1.200" fill="none" stroke="#aaa" stroke-width=".600"/></svg><div class="t" style="font-size:11px;line-height:11px;color:#fff;left:90.5px;width:100px;text-align:center;top:831.5px;transform:scaleX(0.968);transform-origin:50% 0;">Fokus och</div><div class="t" style="font-size:11px;line-height:11px;color:#fff;left:90.5px;width:100px;text-align:center;top:844.5px;transform:scaleX(1.065);transform-origin:50% 0;">Temp.txt</div><svg style="left:205px;top:783px;" width="33" height="43" viewBox="0 0 33 43"><path d="M.500 .500h24l8 8v34H.500z" fill="#f4f6fa" stroke="#a8b0bc" stroke-width="1"/><path d="M24.500 .500v8h8" fill="#d8dce4" stroke="#a8b0bc" stroke-width=".8"/><path d="M2 11.500h29" stroke="#c4cad8" stroke-width="1"/><path d="M2 14.500h29" stroke="#c4cad8" stroke-width="1"/><path d="M2 17.500h29" stroke="#c4cad8" stroke-width="1"/><path d="M2 20.500h29" stroke="#c4cad8" stroke-width="1"/><path d="M2 23.500h29" stroke="#c4cad8" stroke-width="1"/><path d="M2 26.500h29" stroke="#c4cad8" stroke-width="1"/><path d="M2 29.500h29" stroke="#c4cad8" stroke-width="1"/><path d="M2 32.500h29" stroke="#c4cad8" stroke-width="1"/><path d="M2 35.500h29" stroke="#c4cad8" stroke-width="1"/><path d="M2 38.500h29" stroke="#c4cad8" stroke-width="1"/><circle cx="4" cy="4" r="1.200" fill="none" stroke="#aaa" stroke-width=".600"/><circle cx="9" cy="4" r="1.200" fill="none" stroke="#aaa" stroke-width=".600"/><circle cx="14" cy="4" r="1.200" fill="none" stroke="#aaa" stroke-width=".600"/><circle cx="19" cy="4" r="1.200" fill="none" stroke="#aaa" stroke-width=".600"/></svg><div class="t" style="font-size:11px;line-height:11px;color:#fff;left:169.7px;width:100px;text-align:center;top:831.5px;transform:scaleX(1.108);transform-origin:50% 0;">Nytt</div><div class="t" style="font-size:11px;line-height:11px;color:#fff;left:169.7px;width:100px;text-align:center;top:844.5px;transform:scaleX(1.022);transform-origin:50% 0;">textdokumen…</div><div style="left:319px;top:700px;width:92px;height:161px;background:#fff;border-left:2.500px solid #d4d0c8;"></div><div class="t" style="font-size:11px;line-height:11px;color:#000;font-weight:bold;left:350.6px;top:810.8px;transform:scaleX(1.103);transform-origin:0 0;">Se även</div><div style="left:350px;top:828px;width:57px;height:33px;overflow:hidden;"><div class="t" style="font-size:11px;line-height:11px;color:#10106a;left:0.6px;top:3.5px;">Åtgärdscenter</div><div class="t" style="font-size:11px;line-height:11px;color:#10106a;left:0.6px;top:24.5px;">Windows Update</div></div><div style="left:407px;top:531px;width:286px;height:330px;background:#d4d0c8;box-shadow:inset 1px 1px #fff,inset 2px 2px #d4d0c8;border-left:1px solid #e8e6e0;border-top:1px solid #e8e6e0;"></div><div style="left:411px;top:534.5px;width:278px;height:17px;background:linear-gradient(90deg,#8a8a8a,#9a9a9a 50%,#a4a4a4);"></div><svg style="left:413px;top:535.5px;" width="14" height="14" viewBox="0 0 14 14"><path d="M2 4l10 7" stroke="#e8a020" stroke-width="3.200"/><path d="M2 11l10-7" stroke="#222" stroke-width="2.600"/><circle cx="2.500" cy="11" r="1.800" fill="#222"/><circle cx="11.500" cy="4" r="1.800" fill="#222"/></svg><div class="t" style="font-size:11.5px;line-height:11.5px;color:#ececec;font-weight:bold;left:429.5px;top:537.4px;transform:scaleX(1.033);transform-origin:0 0;">Control Panel</div><div style="left:413.8px;top:577.4px;width:290px;height:284px;background:#d4d0c8;border-top:1px solid #fff;border-left:1px solid #fff;"></div><div style="left:416px;top:558.5px;width:67.7px;height:19px;background:#d4d0c8;border:1px solid #fff;border-right:2px solid #606060;border-bottom:none;border-radius:2px 2px 0 0;"></div><div style="left:486.4px;top:558.5px;width:58px;height:19px;background:#d4d0c8;border:1px solid #fff;border-right:2px solid #606060;border-bottom:none;border-radius:2px 2px 0 0;"></div><div style="left:611.4px;top:558.5px;width:90px;height:19px;background:#d4d0c8;border:1px solid #fff;border-right:2px solid #606060;border-bottom:none;border-radius:2px 2px 0 0;"></div><div style="left:545.3px;top:556.5px;width:65.5px;height:22.5px;background:#d4d0c8;border:1px solid #fff;border-right:2px solid #404040;border-bottom:none;border-radius:2px 2px 0 0;"></div><svg style="left:420.5px;top:560.5px;" width="17" height="15" viewBox="0 0 17 15"><path d="M1 4h3l1.500-2.500h5L12 4h4v10H1z" fill="#222"/><circle cx="8.500" cy="9" r="3.600" fill="#eee"/><circle cx="8.500" cy="9" r="2.300" fill="#e8a020"/></svg><div class="t" style="font-size:11px;line-height:11px;color:#000;left:443.3px;top:564.3px;transform:scaleX(0.942);transform-origin:0 0;">Camera</div><svg style="left:491.5px;top:560.8px;" width="15" height="15" viewBox="0 0 15 15"><circle cx="7.500" cy="7.500" r="6.500" fill="#d9a520" stroke="#7a6a40" stroke-width=".800"/><circle cx="7.500" cy="7.500" r="5" fill="none" stroke="#f4e0a0" stroke-width=".800"/></svg><div class="t" style="font-size:11px;line-height:11px;color:#000;left:513.2px;top:564.3px;transform:scaleX(0.934);transform-origin:0 0;">Filters</div><svg style="left:549.5px;top:557.5px;" width="18" height="18" viewBox="0 0 20 20"><circle cx="8.5" cy="12" r="3.5" fill="none" stroke="#2a2a2a" stroke-width="1.8"/><line x1="12.3" y1="12.0" x2="14.5" y2="12.0" stroke="#2a2a2a" stroke-width="2.2"/><line x1="11.2" y1="14.7" x2="12.7" y2="16.2" stroke="#2a2a2a" stroke-width="2.2"/><line x1="8.5" y1="15.8" x2="8.5" y2="18.0" stroke="#2a2a2a" stroke-width="2.2"/><line x1="5.8" y1="14.7" x2="4.3" y2="16.2" stroke="#2a2a2a" stroke-width="2.2"/><line x1="4.7" y1="12.0" x2="2.5" y2="12.0" stroke="#2a2a2a" stroke-width="2.2"/><line x1="5.8" y1="9.3" x2="4.3" y2="7.8" stroke="#2a2a2a" stroke-width="2.2"/><line x1="8.5" y1="8.2" x2="8.5" y2="6.0" stroke="#2a2a2a" stroke-width="2.2"/><line x1="11.2" y1="9.3" x2="12.7" y2="7.8" stroke="#2a2a2a" stroke-width="2.2"/><circle cx="15.2" cy="4.8" r="1.7" fill="none" stroke="#e8a020" stroke-width="0.6"/><line x1="16.6" y1="4.8" x2="18.8" y2="4.8" stroke="#e8a020" stroke-width="2.2"/><line x1="16.2" y1="5.8" x2="17.7" y2="7.3" stroke="#e8a020" stroke-width="2.2"/><line x1="15.2" y1="6.2" x2="15.2" y2="8.4" stroke="#e8a020" stroke-width="2.2"/><line x1="14.2" y1="5.8" x2="12.7" y2="7.3" stroke="#e8a020" stroke-width="2.2"/><line x1="13.8" y1="4.8" x2="11.6" y2="4.8" stroke="#e8a020" stroke-width="2.2"/><line x1="14.2" y1="3.8" x2="12.7" y2="2.3" stroke="#e8a020" stroke-width="2.2"/><line x1="15.2" y1="3.4" x2="15.2" y2="1.2" stroke="#e8a020" stroke-width="2.2"/><line x1="16.2" y1="3.8" x2="17.7" y2="2.3" stroke="#e8a020" stroke-width="2.2"/></svg><div class="t" style="font-size:11px;line-height:11px;color:#000;left:574.4px;top:562.2px;transform:scaleX(0.990);transform-origin:0 0;">Focus</div><svg style="left:614.5px;top:560px;" width="16" height="16" viewBox="0 0 20 20"><g transform="rotate(135 10 10)"><rect x="2.5" y="7.8" width="9" height="4.4" fill="#2a2a2a"/><path d="M11 7.300l2.200-2.300h4.800v10h-4.800l-2.200-2.300z" fill="#2a2a2a"/><rect x="18.300" y="6.500" width="1.800" height="7" fill="#e8a020"/></g></svg><div class="t" style="font-size:11px;line-height:11px;color:#000;left:637.8px;top:564.3px;transform:scaleX(1.025);transform-origin:0 0;">Telescope</div><div class="grp" style="left:420.3px;top:587.5px;width:280px;height:29px;"></div><div style="left:429px;top:583px;width:68px;height:11px;background:#d4d0c8;"></div><div class="t" style="font-size:11px;line-height:11px;color:#000;left:431.5px;top:584px;transform:scaleX(0.999);transform-origin:0 0;">Connected to</div><div class="t" style="font-size:11.5px;line-height:11.5px;color:#000;font-weight:bold;left:429.5px;top:599.3px;transform:scaleX(1.149);transform-origin:0 0;font-style:italic;">myFocuserPro2ASCOM</div><div class="grp" style="left:420px;top:629.7px;width:58px;height:221.5px;"></div><div style="left:423.5px;top:632px;width:42.5px;height:216px;background:#fff;"></div><div style="left:432.8px;top:639.8px;width:2.5px;height:198.5px;background:#808080;box-shadow:1px 0 #d4d0c8;"></div><div style="left:448px;top:644px;width:4.5px;height:1px;background:#000;"></div><div style="left:448px;top:663px;width:4.5px;height:1px;background:#000;"></div><div style="left:448px;top:682px;width:4.5px;height:1px;background:#000;"></div><div style="left:448px;top:701px;width:4.5px;height:1px;background:#000;"></div><div style="left:448px;top:720px;width:4.5px;height:1px;background:#000;"></div><div style="left:448px;top:739px;width:4.5px;height:1px;background:#000;"></div><div style="left:448px;top:758px;width:4.5px;height:1px;background:#000;"></div><div style="left:448px;top:777px;width:4.5px;height:1px;background:#000;"></div><div style="left:448px;top:796px;width:4.5px;height:1px;background:#000;"></div><div style="left:448px;top:815px;width:4.5px;height:1px;background:#000;"></div><div style="left:448px;top:834px;width:4.5px;height:1px;background:#000;"></div><div style="left:455.3px;top:637.8px;width:12px;height:13.5px;background:#d4d0c8;"></div><div class="t" style="font-size:11px;line-height:11px;color:#000;left:458.3px;top:640.1px;">In</div><div style="left:455px;top:827.5px;width:21.5px;height:13.5px;background:#d4d0c8;"></div><div class="t" style="font-size:11px;line-height:11px;color:#000;left:458.6px;top:829.5px;">Out</div><svg style="left:426.5px;top:732.5px;" width="21" height="10" viewBox="0 0 21 10"><path d="M.500 .500h15l4.500 4.500-4.500 4.500h-15z" fill="#d4d0c8" stroke="#808080"/><path d="M.500 9V.500h15" stroke="#fff" fill="none"/></svg><div class="grp" style="left:485.4px;top:630.7px;width:177.5px;height:74.2px;"></div><div style="left:494px;top:625px;width:89px;height:12px;background:#d4d0c8;"></div><div class="t" style="font-size:11px;line-height:11px;color:#000;left:496.5px;top:626.3px;transform:scaleX(0.979);transform-origin:0 0;">Focus Information</div><div class="t" style="font-size:11px;line-height:11px;color:#000;left:495.5px;top:638.8px;transform:scaleX(0.957);transform-origin:0 0;">Current position:</div><div class="t" style="font-size:11px;line-height:11px;color:#000;left:604.9px;top:638.8px;transform:scaleX(0.980);transform-origin:0 0;">4930</div><div class="t" style="font-size:11px;line-height:11px;color:#000;left:495.5px;top:656.7px;transform:scaleX(0.984);transform-origin:0 0;">Temperature:</div><div class="t" style="font-size:11px;line-height:11px;color:#000;left:604.9px;top:656.7px;transform:scaleX(0.976);transform-origin:0 0;">0,63</div><div class="t" style="font-size:11px;line-height:11px;color:#000;left:495.5px;top:674.5px;transform:scaleX(0.994);transform-origin:0 0;">Last Focus Temp:</div><div class="t" style="font-size:11px;line-height:11px;color:#000;left:604.9px;top:674.5px;transform:scaleX(0.976);transform-origin:0 0;">0,85</div><div class="t" style="font-size:11px;line-height:11px;color:#000;left:495.5px;top:691px;transform:scaleX(0.990);transform-origin:0 0;">Last Focus Time:</div><div class="t" style="font-size:11px;line-height:11px;color:#000;left:604.9px;top:691px;transform:scaleX(0.952);transform-origin:0 0;">18:12</div><div class="grp" style="left:485.4px;top:719.4px;width:177.5px;height:132px;"></div><div style="left:494px;top:714px;width:70px;height:12px;background:#d4d0c8;"></div><div class="t" style="font-size:11px;line-height:11px;color:#000;left:496.3px;top:715.3px;transform:scaleX(0.976);transform-origin:0 0;">Focus Control</div><div class="t" style="font-size:11px;line-height:11px;color:#000;left:495.3px;top:734.1px;transform:scaleX(0.934);transform-origin:0 0;">In:</div><div class="t" style="font-size:11px;line-height:11px;color:#000;left:495.3px;top:759.3px;transform:scaleX(0.951);transform-origin:0 0;">Steps:</div><div class="t" style="font-size:11px;line-height:11px;color:#000;left:495.3px;top:783.7px;transform:scaleX(0.956);transform-origin:0 0;">Out:</div><div class="btn" style="left:524px;top:728.3px;width:64.6px;height:21px;"></div><div class="t" style="font-size:11px;line-height:11px;color:#000;left:526.3px;width:60px;text-align:center;top:734.1px;transform:scaleX(0.962);transform-origin:50% 0;">Fine</div><div class="btn" style="left:591px;top:728.3px;width:64.7px;height:21px;"></div><div class="t" style="font-size:11px;line-height:11px;color:#000;left:593.3px;width:60px;text-align:center;top:734.1px;transform:scaleX(0.949);transform-origin:50% 0;">Coarse</div><div class="btn" style="left:524px;top:778.3px;width:64.6px;height:21px;"></div><div class="t" style="font-size:11px;line-height:11px;color:#000;left:526.3px;width:60px;text-align:center;top:784.1px;transform:scaleX(0.962);transform-origin:50% 0;">Fine</div><div class="btn" style="left:591px;top:778.3px;width:64.7px;height:21px;"></div><div class="t" style="font-size:11px;line-height:11px;color:#000;left:593.3px;width:60px;text-align:center;top:784.1px;transform:scaleX(0.949);transform-origin:50% 0;">Coarse</div><div class="btn" style="left:524px;top:802.2px;width:64.6px;height:21px;"></div><div class="t" style="font-size:11px;line-height:11px;color:#000;left:526.3px;width:60px;text-align:center;top:808px;transform:scaleX(1.026);transform-origin:50% 0;">Zero</div><div class="btn" style="left:591px;top:802.2px;width:64.7px;height:21px;"></div><div class="t" style="font-size:11px;line-height:11px;color:#000;left:593.3px;width:60px;text-align:center;top:808px;transform:scaleX(1.049);transform-origin:50% 0;">Go To</div><div class="fld" style="left:526.7px;top:754.5px;width:59px;height:18.5px;"></div><div class="t" style="font-size:11px;line-height:11px;color:#000;left:530.7px;top:759.2px;">10</div><div class="btn" style="left:568.7px;top:756.5px;width:15px;height:7.2px;"></div><div class="btn" style="left:568.7px;top:763.8px;width:15px;height:7.2px;"></div><div style="left:573.7px;top:758.9px;width:0;height:0;border-left:2.5px solid transparent;border-right:2.5px solid transparent;border-bottom:2.5px solid #000;"></div><div style="left:573.7px;top:766.1px;width:0;height:0;border-left:2.5px solid transparent;border-right:2.5px solid transparent;border-top:2.5px solid #000;"></div><div class="fld" style="left:594.6px;top:754.5px;width:58.5px;height:18.5px;"></div><div class="t" style="font-size:11px;line-height:11px;color:#000;left:598.6px;top:759.2px;">50</div><div class="btn" style="left:636.1px;top:756.5px;width:15px;height:7.2px;"></div><div class="btn" style="left:636.1px;top:763.8px;width:15px;height:7.2px;"></div><div style="left:641.1px;top:758.9px;width:0;height:0;border-left:2.5px solid transparent;border-right:2.5px solid transparent;border-bottom:2.5px solid #000;"></div><div style="left:641.1px;top:766.1px;width:0;height:0;border-left:2.5px solid transparent;border-right:2.5px solid transparent;border-top:2.5px solid #000;"></div><div class="btn" style="left:524px;top:826.6px;width:131.7px;height:21px;"></div><div class="t" style="font-size:11px;line-height:11px;color:#000;left:540px;width:100px;text-align:center;top:832.5px;transform:scaleX(0.990);transform-origin:50% 0;">Stop Focuser</div><div class="grp" style="left:670.3px;top:630.7px;width:40px;height:150px;"></div><div style="left:679px;top:625px;width:12px;height:12px;background:#d4d0c8;"></div><div class="t" style="font-size:11px;line-height:11px;color:#000;left:681.5px;top:626.3px;">Fo</div><div class="chk" style="left:680.5px;top:643px;width:12px;height:12px;"></div><div class="chk" style="left:680.5px;top:661.6px;width:12px;height:12px;"></div><div class="chk" style="left:680.5px;top:681.5px;width:12px;height:12px;"><svg width="12" height="12" viewBox="0 0 13 13" style="position:absolute;left:0;top:0"><path d="M3 6l2 2.2L10 3.2" stroke="#000" stroke-width="2" fill="none"/></svg></div><div class="chk" style="left:680.5px;top:702px;width:12px;height:12px;"></div><div class="chk" style="left:680.5px;top:720.8px;width:12px;height:12px;"></div><div class="t" style="font-size:11px;line-height:11px;color:#000;left:680.5px;top:741.1px;">Fo</div><div class="btn" style="left:678px;top:754.5px;width:30px;height:20px;"></div><div class="grp" style="left:670.3px;top:795.2px;width:40px;height:56px;"></div><div style="left:679px;top:789px;width:12px;height:12px;background:#d4d0c8;"></div><div class="t" style="font-size:11px;line-height:11px;color:#000;left:681.5px;top:791px;">Fi</div><div class="t" style="font-size:11px;line-height:11px;color:#000;left:680.5px;top:810.5px;">Bi</div><div class="t" style="font-size:11px;line-height:11px;color:#000;left:680.5px;top:833.5px;">Ex</div><div style="left:690px;top:0px;width:1113px;height:861px;background:#d4d0c8;border-left:1px solid #f4f2ec;"></div><div class="t" style="font-size:11px;line-height:11px;color:#000;left:698.6px;top:2.4px;transform:scaleX(0.893);transform-origin:0 0;">File</div><div class="t" style="font-size:11px;line-height:11px;color:#000;left:727.2px;top:2.4px;transform:scaleX(0.975);transform-origin:0 0;">Tools</div><div class="t" style="font-size:11px;line-height:11px;color:#000;left:763.6px;top:2.4px;transform:scaleX(0.944);transform-origin:0 0;">View</div><div class="t" style="font-size:11px;line-height:11px;color:#000;left:797.3px;top:2.4px;transform:scaleX(0.965);transform-origin:0 0;">Darks</div><div class="t" style="font-size:11px;line-height:11px;color:#000;left:836.3px;top:2.4px;transform:scaleX(0.950);transform-origin:0 0;">Bookmarks</div><div class="t" style="font-size:11px;line-height:11px;color:#000;left:899px;top:2.4px;transform:scaleX(0.967);transform-origin:0 0;">Help</div><svg style="left:693px;top:17px;" width="798" height="514" viewBox="0 0 798 514"><rect width="798" height="514" fill="#000"/><path d="M361 287h1M737 239h1M405 301h1M147 263h1M502 407h1M75 156h1M72 415h1M553 21h1M783 495h1M521 316h1M126 8h1M421 31h1M152 124h1M24 238h1M351 432h1M414 328h1M398 340h1M364 143h1M795 511h1M670 363h1M251 118h1M230 36h1M611 205h1M675 198h1M764 435h1M0 108h1M725 241h1M781 204h1M58 323h1M620 138h1M69 171h1M768 389h1M94 126h1M81 31h1M635 91h1M446 230h1M152 375h1M104 330h1M93 216h1M170 138h1M774 412h1M242 454h1M168 202h1M681 329h1M80 508h1M170 132h1M616 169h1M236 38h1M72 299h1M194 308h1M296 232h1M764 248h1M458 445h1M146 79h1M724 420h1M199 97h1M589 482h1M157 487h1M703 310h1M336 53h1M31 494h1M190 361h1M205 423h1M475 151h1M140 370h1M55 117h1M446 437h1M490 144h1M731 105h1M13 138h1M355 31h1M140 189h1M456 67h1M289 457h1M781 337h1M551 300h1M112 18h1M14 467h1M559 494h1M17 326h1M384 375h1M254 513h1M60 280h1M587 462h1M587 361h1M632 469h1M280 351h1M718 447h1M332 406h1M688 294h1M498 196h1M464 312h1M64 328h1M792 451h1M580 199h1M586 298h1M351 430h1M67 385h1M24 308h1M383 118h1M557 255h1M490 472h1M204 6h1M240 348h1M161 87h1M722 339h1M352 457h1M261 342h1M158 221h1M642 469h1M702 197h1M465 162h1M109 255h1M667 435h1M567 487h1M221 87h1M359 141h1M171 212h1M499 253h1M251 430h1M783 232h1M60 16h1M696 21h1M565 293h1M246 406h1M15 70h1M363 13h1M661 122h1M112 24h1M501 229h1M502 336h1M643 492h1M546 102h1M379 92h1M9 242h1M569 92h1M217 177h1M556 267h1M490 388h1M314 406h1" stroke="#262626" stroke-width="1.200" fill="none"/><circle cx="333.0" cy="190.0" r=".9" fill="#8a8a8a"/><circle cx="233.6" cy="69.8" r=".9" fill="#8a8a8a"/><circle cx="88.0" cy="65.0" r=".9" fill="#8a8a8a"/><circle cx="227.8" cy="170.0" r=".9" fill="#8a8a8a"/><circle cx="756.0" cy="223.8" r=".9" fill="#8a8a8a"/><circle cx="366.6" cy="43.0" r=".9" fill="#8a8a8a"/><circle cx="329.6" cy="92.5" r=".9" fill="#8a8a8a"/><circle cx="503.7" cy="389.6" r=".9" fill="#8a8a8a"/><circle cx="609.0" cy="413.7" r=".9" fill="#8a8a8a"/><circle cx="317.5" cy="405.7" r=".9" fill="#8a8a8a"/><circle cx="582.7" cy="463.0" r=".9" fill="#8a8a8a"/><circle cx="456.8" cy="501.0" r=".9" fill="#8a8a8a"/><circle cx="708.6" cy="356.6" r=".9" fill="#8a8a8a"/><circle cx="91.6" cy="299.4" r=".9" fill="#8a8a8a"/><circle cx="29.6" cy="341.8" r=".9" fill="#8a8a8a"/><circle cx="38.5" cy="341.8" r=".9" fill="#8a8a8a"/><circle cx="73.8" cy="438.0" r=".9" fill="#8a8a8a"/><circle cx="122.0" cy="15.0" r=".9" fill="#8a8a8a"/><circle cx="212.0" cy="19.0" r=".9" fill="#8a8a8a"/><circle cx="373.0" cy="96.0" r=".9" fill="#8a8a8a"/><circle cx="474.0" cy="107.0" r=".9" fill="#8a8a8a"/><circle cx="457.0" cy="144.0" r=".9" fill="#8a8a8a"/><circle cx="178.0" cy="176.0" r=".9" fill="#8a8a8a"/><circle cx="619.0" cy="117.0" r=".9" fill="#8a8a8a"/><circle cx="707.0" cy="83.0" r=".9" fill="#8a8a8a"/><circle cx="713.0" cy="162.0" r=".9" fill="#8a8a8a"/><circle cx="347.0" cy="236.0" r=".9" fill="#8a8a8a"/><circle cx="367.0" cy="218.0" r=".9" fill="#8a8a8a"/><circle cx="52.0" cy="340.0" r=".9" fill="#8a8a8a"/><circle cx="153.0" cy="328.0" r=".9" fill="#8a8a8a"/><circle cx="197.0" cy="455.0" r=".9" fill="#8a8a8a"/><circle cx="267.0" cy="481.0" r=".9" fill="#8a8a8a"/><circle cx="427.0" cy="507.0" r=".9" fill="#8a8a8a"/><circle cx="418.0" cy="508.0" r=".9" fill="#8a8a8a"/><circle cx="34.9" cy="72.5" r="2.1" fill="#fff"/><circle cx="288.0" cy="59.0" r="2.1" fill="#fff"/><circle cx="578.0" cy="25.0" r="2.3" fill="#fff"/><circle cx="511.0" cy="27.8" r="1.6" fill="#fff"/><circle cx="436.7" cy="36.7" r="1.2" fill="#fff"/><circle cx="229.6" cy="103.0" r="1.4" fill="#fff"/><circle cx="410.0" cy="108.0" r="1.4" fill="#fff"/><circle cx="71.0" cy="148.0" r="1.4" fill="#fff"/><circle cx="698.8" cy="119.8" r="1.4" fill="#fff"/><circle cx="430.5" cy="192.0" r="1.2" fill="#fff"/><circle cx="610.0" cy="192.0" r="1.2" fill="#fff"/><circle cx="447.0" cy="212.0" r="1.2" fill="#fff"/><circle cx="426.0" cy="219.0" r="1.2" fill="#fff"/><circle cx="366.6" cy="228.7" r="2.2" fill="#fff"/><circle cx="483.6" cy="226.0" r="1.6" fill="#fff"/><circle cx="502.0" cy="231.8" r="1.5" fill="#fff"/><circle cx="594.0" cy="252.0" r="1.4" fill="#fff"/><circle cx="712.0" cy="248.0" r="1.2" fill="#fff"/><circle cx="131.8" cy="238.5" r="1.1" fill="#fff"/><circle cx="523.8" cy="269.5" r="1.5" fill="#fff"/><circle cx="449.0" cy="282.5" r="1.9" fill="#fff"/><circle cx="400.6" cy="272.6" r="1.2" fill="#fff"/><circle cx="222.9" cy="295.0" r="1.9" fill="#fff"/><circle cx="50.6" cy="319.0" r="1.4" fill="#fff"/><circle cx="235.8" cy="341.0" r="1.5" fill="#fff"/><circle cx="383.6" cy="340.5" r="1.2" fill="#fff"/><circle cx="266.6" cy="366.4" r="2.2" fill="#fff"/><circle cx="261.7" cy="361.0" r="1.1" fill="#fff"/><circle cx="602.4" cy="363.7" r="1.2" fill="#fff"/><circle cx="403.0" cy="387.8" r="2.0" fill="#fff"/><circle cx="115.8" cy="403.0" r="2.1" fill="#fff"/><circle cx="758.6" cy="443.6" r="1.2" fill="#fff"/><circle cx="375.0" cy="471.8" r="1.2" fill="#fff"/><circle cx="437.6" cy="479.8" r="1.2" fill="#fff"/><circle cx="482.7" cy="498.0" r="1.2" fill="#fff"/><circle cx="713.0" cy="504.8" r="1.3" fill="#fff"/><path d="M685.400 0V514M0 292.300H765" stroke="#2fa82f" stroke-width="1.200"/><rect x="678.400" y="285.300" width="14" height="14" fill="none" stroke="#2fa82f" stroke-width="1.200"/></svg><div style="left:1496px;top:17px;width:307px;height:254px;background:#0b1d1e;"></div><div style="left:1496px;top:17px;width:307px;height:17.5px;background:linear-gradient(#52aef0 0,#1f88de 7%,#0e66b8 35%,#063866 62%,#01101e 88%,#000 100%);"></div><div class="t" style="font-size:11px;line-height:11px;color:#fff;left:1498.5px;top:19.8px;transform:scaleX(0.996);transform-origin:0 0;">Star Profile</div><svg style="left:1790px;top:21px;" width="9" height="9" viewBox="0 0 9 9"><path d="M1 1l7 7M8 1L1 8" stroke="#fff" stroke-width="1.500"/></svg><div style="left:1642px;top:34.5px;width:156px;height:156.5px;background:#000;"></div><svg style="left:1496px;top:18px;" width="307" height="253" viewBox="0 0 307 253"><polyline points="5.0,171.4 27.0,180.2 41.0,142.6 48.0,133.0 54.5,128.4 68.7,21.8 82.8,105.5 89.7,94.9 97.5,123.7 103.8,142.6 110.7,164.5 117.9,161.4 125.0,165.0 132.0,163.0 139.0,162.3 146.0,165.0" fill="none" stroke="#e12222" stroke-width="1.200"/><path d="M224.500 16.500V173M146 95.500H302" stroke="#3fa83f" stroke-width="1" stroke-dasharray="3.500 2.500"/><circle cx="224.500" cy="95.500" r="1.600" fill="#d03030"/></svg><div class="t" style="font-size:11px;line-height:11px;color:#e12222;left:1498.8px;top:39.8px;transform:scaleX(0.899);transform-origin:0 0;">Peak</div><div class="t" style="font-size:11px;line-height:11px;color:#e12222;left:1498.8px;top:54.2px;transform:scaleX(0.950);transform-origin:0 0;">327</div><div class="t" style="font-size:11px;line-height:11px;color:#e12222;left:1500.4px;top:204.8px;transform:scaleX(0.979);transform-origin:0 0;">Mid row FWHM: 1.31</div><div class="t" style="font-size:11px;line-height:11px;color:#e12222;left:1500.4px;top:241.5px;transform:scaleX(0.878);transform-origin:0 0;">HFD:</div><div class="t" style="font-size:46px;line-height:46px;color:#f01818;left:1527px;top:222.9px;transform:scaleX(0.903);transform-origin:0 0;">5.47</div><div class="t" style="font-size:11px;line-height:11px;color:#e12222;left:1616.4px;top:241.5px;transform:scaleX(1.023);transform-origin:0 0;">11.29"</div><div style="left:1496px;top:276.5px;width:307px;height:254px;background:#000;"></div><div style="left:1496px;top:276.3px;width:307px;height:17.5px;background:linear-gradient(#52aef0 0,#1f88de 7%,#0e66b8 35%,#063866 62%,#01101e 88%,#000 100%);"></div><div class="t" style="font-size:11px;line-height:11px;color:#fff;left:1498.5px;top:279.1px;transform:scaleX(1.028);transform-origin:0 0;">Target</div><svg style="left:1790px;top:280.3px;" width="9" height="9" viewBox="0 0 9 9"><path d="M1 1l7 7M8 1L1 8" stroke="#fff" stroke-width="1.500"/></svg><div style="left:1501.7px;top:299.8px;width:101.5px;height:21px;background:#cfcfcf;box-shadow:inset 1px 1px #e6e6e6,inset -1px -1px #a8a8a8;"></div><div class="t" style="font-size:11px;line-height:11px;color:#333;left:1521px;width:60px;text-align:center;top:305.8px;transform:scaleX(1.005);transform-origin:50% 0;">100</div><div style="left:1588px;top:311.5px;width:0;height:0;border-left:4px solid transparent;border-right:4px solid transparent;border-top:4px solid #000;"></div><div class="btn" style="left:1500.8px;top:322.3px;width:50px;height:21.5px;"></div><div class="t" style="font-size:12px;line-height:12px;color:#000;left:1510.5px;width:30px;text-align:center;top:327.6px;">+</div><div class="btn" style="left:1552px;top:322.3px;width:51px;height:21.5px;"></div><div class="t" style="font-size:12px;line-height:12px;color:#000;left:1562.5px;width:30px;text-align:center;top:327.6px;">-</div><div class="btn" style="left:1502.3px;top:346.3px;width:100px;height:20px;"></div><div class="t" style="font-size:11px;line-height:11px;color:#000;left:1522px;width:60px;text-align:center;top:350.7px;transform:scaleX(0.959);transform-origin:50% 0;">Clear</div><div class="chk" style="left:1499.8px;top:371.5px;width:12px;height:12px;"></div><div class="t" style="font-size:11px;line-height:11px;color:#fff;left:1516.8px;top:372.9px;transform:scaleX(0.987);transform-origin:0 0;">Reference Circle</div><div class="t" style="font-size:11px;line-height:11px;color:#fff;left:1500.8px;top:391.3px;transform:scaleX(0.960);transform-origin:0 0;">Radius:</div><div class="fld" style="left:1542.3px;top:387px;width:45.5px;height:20.5px;"></div><div class="t" style="font-size:11px;line-height:11px;color:#000;left:1520.8px;width:60px;text-align:right;top:392.7px;">2.0</div><div class="btn" style="left:1588.8px;top:387px;width:15px;height:10.2px;"></div><div class="btn" style="left:1588.8px;top:397.2px;width:15px;height:10.2px;"></div><div style="left:1593.8px;top:390.9px;width:0;height:0;border-left:2.5px solid transparent;border-right:2.5px solid transparent;border-bottom:2.5px solid #000;"></div><div style="left:1593.8px;top:401.1px;width:0;height:0;border-left:2.5px solid transparent;border-right:2.5px solid transparent;border-top:2.5px solid #000;"></div><svg style="left:1610px;top:292px;" width="193" height="238" viewBox="0 0 193 238"><circle cx="96.3" cy="120.2" r="18" fill="none" stroke="#9a9a9a" stroke-width="1.100"/><circle cx="96.3" cy="120.2" r="36.3" fill="none" stroke="#9a9a9a" stroke-width="1.100"/><circle cx="96.3" cy="120.2" r="54.5" fill="none" stroke="#9a9a9a" stroke-width="1.100"/><circle cx="96.3" cy="120.2" r="73" fill="none" stroke="#9a9a9a" stroke-width="1.100"/><path d="M4 120.2H188.600M96.3 7.800V231.800" stroke="#9a9a9a" stroke-width="1.100"/><path d="M1.4 119.2H188.600" stroke="#9a9a9a" stroke-width="2" stroke-dasharray="1 6.300"/><path d="M95.3 10.7V231.800" stroke="#9a9a9a" stroke-width="2" stroke-dasharray="1 6.300"/><path d="M101.9 137.8l1.500 1.500-1.500 1.500-1.500-1.500zM71.2 103.0l1.500 1.500-1.500 1.500-1.500-1.500zM93.8 144.4l1.500 1.500-1.500 1.500-1.500-1.500zM94.8 98.8l1.500 1.500-1.500 1.500-1.500-1.500zM71.6 116.3l1.500 1.500-1.500 1.500-1.500-1.500zM105.6 117.0l1.500 1.500-1.500 1.500-1.500-1.500zM79.8 113.6l1.500 1.500-1.500 1.500-1.500-1.500zM90.2 105.5l1.500 1.500-1.500 1.500-1.500-1.500zM86.9 121.4l1.500 1.500-1.500 1.500-1.500-1.500zM119.1 116.3l1.500 1.500-1.500 1.500-1.500-1.500zM105.9 101.1l1.500 1.500-1.500 1.500-1.500-1.500zM103.8 119.7l1.500 1.500-1.500 1.500-1.500-1.500zM76.4 116.8l1.500 1.500-1.500 1.500-1.500-1.500zM104.6 112.1l1.500 1.500-1.500 1.500-1.500-1.500zM107.1 141.1l1.500 1.500-1.500 1.500-1.500-1.500zM118.8 142.6l1.500 1.500-1.500 1.500-1.500-1.500zM62.0 122.6l1.500 1.500-1.500 1.500-1.500-1.500zM73.6 132.1l1.500 1.500-1.500 1.500-1.500-1.500zM88.4 120.8l1.500 1.500-1.500 1.500-1.500-1.500zM96.0 108.0l1.500 1.500-1.500 1.500-1.500-1.500zM88.9 106.0l1.500 1.500-1.500 1.500-1.500-1.500zM127.9 110.1l1.500 1.500-1.500 1.500-1.500-1.500zM87.3 89.6l1.500 1.500-1.500 1.500-1.500-1.500zM58.0 104.1l1.500 1.500-1.500 1.500-1.500-1.500zM102.6 129.4l1.500 1.500-1.500 1.500-1.500-1.500zM92.5 107.2l1.500 1.500-1.500 1.500-1.500-1.500zM123.3 101.2l1.500 1.500-1.500 1.500-1.500-1.500zM70.2 124.9l1.500 1.500-1.500 1.500-1.500-1.500zM67.5 121.5l1.500 1.500-1.500 1.500-1.500-1.500zM106.1 116.2l1.500 1.500-1.500 1.500-1.500-1.500zM95.0 117.9l1.500 1.500-1.500 1.500-1.500-1.500zM73.8 67.4l1.500 1.500-1.500 1.500-1.500-1.500zM63.0 117.2l1.500 1.500-1.500 1.500-1.500-1.500zM54.7 108.4l1.500 1.500-1.500 1.500-1.500-1.500zM91.1 138.3l1.500 1.500-1.500 1.500-1.500-1.500zM60.1 108.9l1.500 1.500-1.500 1.500-1.500-1.500zM91.5 125.6l1.500 1.500-1.500 1.500-1.500-1.500zM59.8 146.6l1.500 1.500-1.500 1.500-1.500-1.500zM70.9 134.4l1.500 1.500-1.500 1.500-1.500-1.500zM83.0 123.7l1.500 1.500-1.500 1.500-1.500-1.500zM119.9 128.5l1.500 1.500-1.500 1.500-1.500-1.500zM89.6 101.4l1.500 1.500-1.500 1.500-1.500-1.500zM74.1 94.8l1.500 1.500-1.500 1.500-1.500-1.500zM126.8 92.7l1.500 1.500-1.500 1.500-1.500-1.500zM36.1 143.2l1.500 1.500-1.500 1.500-1.500-1.500zM112.2 111.6l1.500 1.500-1.500 1.500-1.500-1.500zM103.6 104.2l1.500 1.500-1.500 1.500-1.500-1.500zM75.6 125.2l1.500 1.500-1.500 1.500-1.500-1.500zM94.8 110.0l1.500 1.500-1.500 1.500-1.500-1.500zM119.1 128.9l1.500 1.500-1.500 1.500-1.500-1.500zM89.7 98.5l1.500 1.500-1.500 1.500-1.500-1.500zM89.7 112.2l1.500 1.500-1.500 1.500-1.500-1.500zM85.5 129.9l1.500 1.500-1.500 1.500-1.500-1.500zM75.6 121.4l1.500 1.500-1.500 1.500-1.500-1.500zM102.8 122.8l1.500 1.500-1.500 1.500-1.500-1.500zM132.5 89.6l1.500 1.500-1.500 1.500-1.500-1.500zM85.7 98.4l1.500 1.500-1.500 1.500-1.500-1.500zM85.6 157.1l1.500 1.500-1.500 1.500-1.500-1.500zM54.4 112.6l1.500 1.500-1.500 1.500-1.500-1.500zM99.9 118.7l1.500 1.500-1.500 1.500-1.500-1.500zM105.1 92.5l1.500 1.500-1.500 1.500-1.500-1.500zM106.2 102.0l1.500 1.500-1.500 1.500-1.500-1.500zM62.7 126.2l1.500 1.500-1.500 1.500-1.500-1.500zM96.3 105.6l1.500 1.500-1.500 1.500-1.500-1.500zM70.6 113.9l1.500 1.500-1.500 1.500-1.500-1.500zM86.6 114.4l1.500 1.500-1.500 1.500-1.500-1.500zM66.7 80.2l1.500 1.500-1.500 1.500-1.500-1.500zM112.9 119.9l1.500 1.500-1.500 1.500-1.500-1.500zM62.1 92.1l1.500 1.500-1.500 1.500-1.500-1.500zM73.0 110.5l1.500 1.500-1.500 1.500-1.500-1.500zM44.4 139.3l1.500 1.500-1.500 1.500-1.500-1.500zM95.2 111.9l1.500 1.500-1.500 1.500-1.500-1.500zM93.7 120.7l1.500 1.500-1.500 1.500-1.500-1.500zM107.8 119.5l1.500 1.500-1.500 1.500-1.500-1.500zM111.8 141.6l1.500 1.500-1.500 1.500-1.500-1.500zM80.5 109.8l1.500 1.500-1.500 1.500-1.500-1.500zM69.1 113.3l1.500 1.500-1.500 1.500-1.500-1.500zM72.2 117.1l1.500 1.500-1.500 1.500-1.500-1.500zM92.7 125.5l1.500 1.500-1.500 1.500-1.500-1.500zM63.7 134.2l1.500 1.500-1.500 1.500-1.500-1.500zM80.5 115.2l1.500 1.500-1.500 1.500-1.500-1.500zM76.4 85.1l1.500 1.500-1.500 1.500-1.500-1.500zM91.7 88.7l1.500 1.500-1.500 1.500-1.500-1.500zM108.6 117.6l1.500 1.500-1.500 1.500-1.500-1.500zM117.6 127.3l1.500 1.500-1.500 1.500-1.500-1.500zM100.6 139.2l1.500 1.500-1.500 1.500-1.500-1.500zM85.7 141.4l1.500 1.500-1.500 1.500-1.500-1.500zM84.0 121.0l1.500 1.500-1.500 1.500-1.500-1.500zM73.1 125.6l1.500 1.500-1.500 1.500-1.500-1.500zM99.9 108.9l1.500 1.500-1.500 1.500-1.500-1.500zM61.1 116.3l1.500 1.500-1.500 1.500-1.500-1.500zM94.9 114.4l1.500 1.500-1.500 1.500-1.500-1.500zM67.1 105.4l1.500 1.500-1.500 1.500-1.500-1.500zM81.2 75.1l1.500 1.500-1.500 1.500-1.500-1.500zM74.9 139.8l1.500 1.500-1.500 1.500-1.500-1.500zM61.0 113.4l1.500 1.500-1.500 1.500-1.500-1.500zM120.1 128.2l1.500 1.500-1.500 1.500-1.500-1.500zM104.8 114.5l1.500 1.500-1.500 1.500-1.500-1.500zM60.1 162.7l1.500 1.500-1.500 1.500-1.500-1.500zM92.5 120.7l1.500 1.500-1.500 1.500-1.500-1.500z" fill="#30306a" stroke="#7474d4" stroke-width=".800"/><path d="M110.3 116.2l7 7M117.3 116.2l-7 7" stroke="#e03030" stroke-width="1.100"/></svg><div class="t" style="font-size:11px;line-height:11px;color:#e8e8e8;left:1670.6px;top:320px;transform:scaleX(0.984);transform-origin:0 0;">Dec</div><div class="t" style="font-size:11px;line-height:11px;color:#e8e8e8;left:1694px;top:327px;">2"</div><div class="t" style="font-size:11px;line-height:11px;color:#e8e8e8;left:1686px;top:346.1px;">1.5"</div><div class="t" style="font-size:11px;line-height:11px;color:#e8e8e8;left:1694px;top:364px;">1"</div><div class="t" style="font-size:11px;line-height:11px;color:#e8e8e8;left:1686px;top:382.1px;">0.5"</div><div class="t" style="font-size:11px;line-height:11px;color:#e8e8e8;left:1614.6px;top:399px;transform:scaleX(0.968);transform-origin:0 0;">RA</div><div class="t" style="font-size:11px;line-height:11px;color:#e8e8e8;left:1769.4px;top:419px;transform:scaleX(0.945);transform-origin:0 0;">SkyE</div><div class="t" style="font-size:11px;line-height:11px;color:#e8e8e8;left:1711px;top:513.8px;transform:scaleX(0.946);transform-origin:0 0;">SkyN</div><div style="left:693px;top:535.5px;width:1110px;height:258px;background:#000;"></div><div style="left:693px;top:535.4px;width:1110px;height:17.5px;background:linear-gradient(#52aef0 0,#1f88de 7%,#0e66b8 35%,#063866 62%,#01101e 88%,#000 100%);"></div><div class="t" style="font-size:11px;line-height:11px;color:#fff;left:695.5px;top:538.2px;transform:scaleX(1.010);transform-origin:0 0;">History</div><svg style="left:1790px;top:539.4px;" width="9" height="9" viewBox="0 0 9 9"><path d="M1 1l7 7M8 1L1 8" stroke="#fff" stroke-width="1.500"/></svg><div style="left:704.7px;top:558.8px;width:108.5px;height:21.5px;background:#cfcfcf;box-shadow:inset 1px 1px #e6e6e6,inset -1px -1px #a8a8a8;"></div><div class="t" style="font-size:11px;line-height:11px;color:#444;left:717.5px;width:80px;text-align:center;top:564.6px;transform:scaleX(1.055);transform-origin:50% 0;">x:100</div><div style="left:798px;top:569.8px;width:0;height:0;border-left:4px solid transparent;border-right:4px solid transparent;border-top:4px solid #000;"></div><div style="left:704.7px;top:581.7px;width:108.5px;height:22px;background:#cfcfcf;box-shadow:inset 1px 1px #e6e6e6,inset -1px -1px #a8a8a8;"></div><div class="t" style="font-size:11px;line-height:11px;color:#444;left:717.5px;width:80px;text-align:center;top:587.5px;transform:scaleX(1.174);transform-origin:50% 0;">y:+/-4"</div><div style="left:798px;top:592.7px;width:0;height:0;border-left:4px solid transparent;border-right:4px solid transparent;border-top:4px solid #000;"></div><div style="left:704.7px;top:604.6px;width:108.5px;height:21.5px;background:#cfcfcf;box-shadow:inset 1px 1px #e6e6e6,inset -1px -1px #a8a8a8;"></div><div class="t" style="font-size:11px;line-height:11px;color:#444;left:717.5px;width:80px;text-align:center;top:610.4px;transform:scaleX(1.001);transform-origin:50% 0;">Settings</div><div style="left:798px;top:615.6px;width:0;height:0;border-left:4px solid transparent;border-right:4px solid transparent;border-top:4px solid #000;"></div><div class="btn" style="left:704.7px;top:627.2px;width:108.5px;height:21.5px;background:#e4e1da;"></div><div class="t" style="font-size:11px;line-height:11px;color:#000;left:717.5px;width:80px;text-align:center;top:633px;transform:scaleX(0.959);transform-origin:50% 0;">Clear</div><div class="chk" style="left:704.7px;top:651.7px;width:12px;height:12px;"></div><div class="t" style="font-size:11px;line-height:11px;color:#fff;left:721.4px;top:652.5px;transform:scaleX(0.991);transform-origin:0 0;">Trendlines</div><div class="chk" style="left:704.7px;top:664.8px;width:12px;height:12px;"><svg width="12" height="12" viewBox="0 0 13 13" style="position:absolute;left:0;top:0"><path d="M3 6l2 2.2L10 3.2" stroke="#000" stroke-width="2" fill="none"/></svg></div><div class="t" style="font-size:11px;line-height:11px;color:#fff;left:721.4px;top:665.7px;transform:scaleX(1.006);transform-origin:0 0;">Corrections</div><div class="t" style="font-size:11px;line-height:11px;color:#5a5ae0;left:703.2px;top:678.9px;transform:scaleX(0.968);transform-origin:0 0;">RA</div><div class="t" style="font-size:11px;line-height:11px;color:#e02222;left:795px;top:678.9px;transform:scaleX(0.984);transform-origin:0 0;">Dec</div><div class="t" style="font-size:11px;line-height:11px;color:#e4e4e4;left:703.2px;top:693px;transform:scaleX(0.966);transform-origin:0 0;">RMS Error:</div><div class="t" style="font-size:11px;line-height:11px;color:#e4e4e4;left:714.1px;top:706.5px;transform:scaleX(1.030);transform-origin:0 0;">RA&nbsp; 0.28 (0.59")</div><div class="t" style="font-size:11px;line-height:11px;color:#e4e4e4;left:710.4px;top:720.6px;transform:scaleX(1.025);transform-origin:0 0;">Dec&nbsp; 0.22 (0.45")</div><div class="t" style="font-size:11px;line-height:11px;color:#e4e4e4;left:712.6px;top:734.1px;transform:scaleX(1.059);transform-origin:0 0;">Tot&nbsp; 0.36 (0.74")</div><div class="t" style="font-size:11px;line-height:11px;color:#e4e4e4;left:703.2px;top:748.2px;transform:scaleX(1.021);transform-origin:0 0;">RA Osc: 0.43</div><svg style="left:824px;top:558px;" width="975" height="194.5" viewBox="0 0 975 194.5"><rect x=".5" y=".5" width="974" height="193.5" fill="#000" stroke="#8c8c8c"/><path d="M1 22.4H974" stroke="#e8e8e8" stroke-width="1" stroke-dasharray="4 3"/><path d="M1 47.4H974" stroke="#e8e8e8" stroke-width="1" stroke-dasharray="4 3"/><path d="M1 72.4H974" stroke="#e8e8e8" stroke-width="1" stroke-dasharray="4 3"/><path d="M1 122.4H974" stroke="#e8e8e8" stroke-width="1" stroke-dasharray="4 3"/><path d="M1 147.4H974" stroke="#e8e8e8" stroke-width="1" stroke-dasharray="4 3"/><path d="M1 172.4H974" stroke="#e8e8e8" stroke-width="1" stroke-dasharray="4 3"/><path d="M1 97.4H974" stroke="#9a9a9a" stroke-width="1.200"/><path d="M245.4 1V193.5M733.8 1V193.5" stroke="#e8e8e8" stroke-width="1" stroke-dasharray="4 3"/><path d="M489.7 1V193.5" stroke="#9a9a9a" stroke-width="1.200"/><path d="M0.9 63.6h3V97.4h-3zM18.8 73.9h3V97.4h-3zM29.8 29.4h3V97.4h-3zM39.5 39.4h3V97.4h-3zM58.3 33.8h3V97.4h-3zM88.1 97.4h3V128.2h-3zM97.2 97.4h3V141.3h-3zM107.5 52.6h3V97.4h-3zM117.2 39.4h3V97.4h-3zM166.2 97.4h3V127.2h-3zM186.5 54.5h3V97.4h-3zM195.3 73.0h3V97.4h-3zM205.4 65.4h3V97.4h-3zM234.5 55.7h3V97.4h-3zM283.1 11.8h3V97.4h-3zM293.5 44.1h3V97.4h-3zM332.4 97.4h3V128.2h-3zM352.1 26.9h3V97.4h-3zM372.5 64.5h3V97.4h-3zM391.3 97.4h3V119.4h-3zM401.3 0.2h3V97.4h-3zM411.7 97.4h3V120.9h-3z" fill="none" stroke="#4848b8" stroke-width="1"/><path d="M440.2 46.7h3V97.4h-3zM449.9 97.4h3V121.9h-3zM460.0 97.4h3V117.9h-3zM489.8 46.7h3V97.4h-3zM499.2 97.4h3V115.4h-3zM509.5 30.7h3V97.4h-3zM518.6 44.1h3V97.4h-3zM538.4 97.4h3V127.9h-3zM548.8 97.4h3V147.7h-3zM558.2 97.4h3V132.0h-3zM616.2 97.4h3V132.0h-3zM636.6 70.8h3V97.4h-3zM665.4 97.4h3V135.1h-3zM685.2 44.8h3V97.4h-3zM695.2 48.2h3V97.4h-3zM704.7 50.4h3V97.4h-3zM714.7 97.4h3V126.6h-3zM724.4 97.4h3V125.1h-3zM744.5 74.9h3V97.4h-3zM753.3 20.6h3V97.4h-3zM763.3 68.6h3V97.4h-3zM773.7 38.8h3V97.4h-3zM783.7 59.8h3V97.4h-3zM793.1 22.2h3V97.4h-3zM802.8 57.3h3V97.4h-3zM822.3 97.4h3V117.2h-3zM851.5 97.4h3V132.0h-3zM861.5 97.4h3V124.8h-3zM871.5 23.1h3V97.4h-3zM881.3 39.4h3V97.4h-3zM900.7 69.9h3V97.4h-3zM910.7 33.8h3V97.4h-3zM920.5 60.8h3V97.4h-3zM939.9 65.5h3V97.4h-3zM959.7 73.0h3V97.4h-3zM969.7 97.4h3V124.8h-3z" fill="none" stroke="#4848b8" stroke-width="1"/><path d="M14.4 97.4h3V123.1h-3z" fill="none" stroke="#b02020" stroke-width="1"/><path d="M739.2 97.4h3V125.1h-3zM876.2 97.4h3V121.9h-3z" fill="none" stroke="#b02020" stroke-width="1"/><polyline points="0.2,110.0 9.3,95.9 19.7,110.0 29.1,125.0 38.5,122.5 47.9,91.2 57.9,124.1 68.3,103.7 78.6,99.0 88.6,84.9 97.4,79.6 107.5,117.8 116.9,121.9 126.9,96.8 137.2,99.9 147.3,97.4 157.0,97.4 167.0,83.9 176.4,99.0 186.5,115.3 196.8,106.8 206.2,109.3 215.6,92.7 225.0,92.7 235.1,114.7 244.8,99.0 254.2,103.7 264.2,90.5 273.7,99.0 283.7,132.9 293.4,116.2 303.4,99.0 312.8,103.7 323.2,92.7 332.6,83.9 342.6,100.6 352.7,126.6 362.4,104.3 371.8,110.0 381.8,92.7 391.9,88.0 401.6,137.6 411.6,84.9 425.4,100.6 440.5,118.8 449.9,85.6 459.9,89.6 470.0,95.9 479.7,106.9 489.7,117.2 499.1,88.7 509.2,124.8 518.9,119.4 528.9,99.0 538.3,83.4 548.4,74.9 558.1,82.4 568.1,92.8 577.5,97.5 587.6,98.1 597.3,100.6 607.3,88.1 616.8,82.4 626.8,95.9 636.5,107.5 646.6,90.6 656.0,95.0 666.0,81.8 675.7,102.2 685.8,118.8 695.2,117.9 704.6,116.9 714.6,84.9 724.3,84.9 734.4,92.8 743.8,106.9 753.8,128.8 763.6,110.0 773.6,121.0 783.0,113.2 793.0,127.9 802.8,110.0 812.8,90.6 822.8,88.7 832.6,92.8 842.6,98.1 852.0,81.8 861.4,84.3 871.5,128.8 881.2,121.0 891.2,92.8 900.6,110.0 910.7,122.6 920.4,113.2 930.4,102.2 939.8,109.4 949.9,90.6 959.6,106.9 969.6,85.6" fill="none" stroke="#6e6ee6" stroke-width="1.7" stroke-linejoin="round"/><polyline points="0.2,84.9 9.3,74.9 19.7,99.0 29.1,100.6 38.5,122.5 47.9,126.3 57.9,113.1 68.3,113.1 78.6,117.8 88.6,108.4 97.4,107.5 107.5,99.0 116.9,106.8 126.9,120.9 137.2,113.1 147.3,110.0 157.0,107.5 167.0,105.9 176.4,108.4 186.5,97.4 196.8,105.3 206.2,97.4 215.6,96.8 225.0,108.4 235.1,106.8 244.8,111.5 254.2,98.1 264.2,99.9 273.7,96.8 283.7,85.5 293.4,103.7 303.4,95.9 312.8,100.6 323.2,110.9 332.6,88.7 342.6,99.0 352.7,97.4 362.4,97.4 371.8,116.2 381.8,95.9 391.9,93.7 401.6,128.8 411.6,108.4 430.1,91.2 440.5,95.9 449.9,95.3 459.9,95.9 470.0,114.7 479.7,81.8 489.7,106.9 499.1,103.7 509.2,90.6 518.9,92.1 528.9,99.0 538.3,100.0 548.4,96.8 558.1,96.8 568.1,102.2 577.5,103.1 587.6,110.0 597.3,97.5 607.3,81.2 616.8,89.6 626.8,97.5 636.5,99.0 646.6,103.7 656.0,118.8 666.0,111.6 675.7,100.6 685.8,94.3 695.2,104.4 704.6,106.3 714.6,95.9 724.3,82.4 734.4,73.3 743.8,89.6 753.8,99.0 763.6,111.0 773.6,102.2 783.0,92.1 793.0,95.0 802.8,93.7 812.8,99.0 822.8,95.9 832.6,98.1 842.6,99.0 852.0,85.6 861.4,93.7 871.5,77.1 881.2,110.0 891.2,106.9 900.6,100.6 910.7,100.0 920.4,98.1 930.4,112.5 939.8,108.4 949.9,124.1 959.6,108.4 969.6,97.5" fill="none" stroke="#e8202a" stroke-width="1.9" stroke-linejoin="round"/></svg><div class="t" style="font-size:11px;line-height:11px;color:#e4e4e4;left:826.4px;top:568.1px;">3"</div><div class="t" style="font-size:11px;line-height:11px;color:#e4e4e4;left:826.4px;top:593.1px;">2"</div><div class="t" style="font-size:11px;line-height:11px;color:#e4e4e4;left:826.4px;top:618.1px;">1"</div><div class="t" style="font-size:11px;line-height:11px;color:#e4e4e4;left:826.4px;top:668.1px;">-1"</div><div class="t" style="font-size:11px;line-height:11px;color:#e4e4e4;left:826.4px;top:693.1px;">-2"</div><div class="t" style="font-size:11px;line-height:11px;color:#e4e4e4;left:826.4px;top:718.1px;">-3"</div><div class="t" style="font-size:11px;line-height:11px;color:#c81e1e;left:1694px;width:100px;text-align:right;top:561.5px;transform:scaleX(0.986);transform-origin:100% 0;">GuideNorth</div><div class="t" style="font-size:11px;line-height:11px;color:#5a5ad8;left:1694px;width:100px;text-align:right;top:737.9px;transform:scaleX(0.980);transform-origin:100% 0;">GuideEast</div><div class="t" style="font-size:11px;line-height:11px;color:#fff;font-weight:bold;left:833.3px;top:767px;transform:scaleX(1.000);transform-origin:0 0;">RA:</div><div class="t" style="font-size:11px;line-height:11px;color:#e4e4e4;left:856.2px;top:767px;transform:scaleX(0.996);transform-origin:0 0;">Agr</div><div class="fld" style="left:879.7px;top:762px;width:40.5px;height:20.5px;"></div><div class="t" style="font-size:11px;line-height:11px;color:#000;left:853.2px;width:60px;text-align:right;top:767.7px;">39</div><div class="btn" style="left:921.2px;top:762px;width:15px;height:10.2px;"></div><div class="btn" style="left:921.2px;top:772.2px;width:15px;height:10.2px;"></div><div style="left:926.2px;top:765.9px;width:0;height:0;border-left:2.5px solid transparent;border-right:2.5px solid transparent;border-bottom:2.5px solid #000;"></div><div style="left:926.2px;top:776.1px;width:0;height:0;border-left:2.5px solid transparent;border-right:2.5px solid transparent;border-top:2.5px solid #000;"></div><div class="t" style="font-size:11px;line-height:11px;color:#e4e4e4;left:946.2px;top:767px;transform:scaleX(0.984);transform-origin:0 0;">Hys</div><div class="fld" style="left:970px;top:762px;width:41px;height:20.5px;"></div><div class="t" style="font-size:11px;line-height:11px;color:#000;left:944px;width:60px;text-align:right;top:767.7px;">10</div><div class="btn" style="left:1012px;top:762px;width:15px;height:10.2px;"></div><div class="btn" style="left:1012px;top:772.2px;width:15px;height:10.2px;"></div><div style="left:1017px;top:765.9px;width:0;height:0;border-left:2.5px solid transparent;border-right:2.5px solid transparent;border-bottom:2.5px solid #000;"></div><div style="left:1017px;top:776.1px;width:0;height:0;border-left:2.5px solid transparent;border-right:2.5px solid transparent;border-top:2.5px solid #000;"></div><div class="t" style="font-size:11px;line-height:11px;color:#e4e4e4;left:1037px;top:767px;transform:scaleX(0.941);transform-origin:0 0;">MnMo</div><div class="fld" style="left:1071px;top:762px;width:51.5px;height:20.5px;"></div><div class="t" style="font-size:11px;line-height:11px;color:#000;left:1077px;top:767.7px;">0.17</div><div class="btn" style="left:1123.5px;top:762px;width:15px;height:10.2px;"></div><div class="btn" style="left:1123.5px;top:772.2px;width:15px;height:10.2px;"></div><div style="left:1128.5px;top:765.9px;width:0;height:0;border-left:2.5px solid transparent;border-right:2.5px solid transparent;border-bottom:2.5px solid #000;"></div><div style="left:1128.5px;top:776.1px;width:0;height:0;border-left:2.5px solid transparent;border-right:2.5px solid transparent;border-top:2.5px solid #000;"></div><div class="t" style="font-size:11px;line-height:11px;color:#fff;font-weight:bold;left:1148.5px;top:767px;transform:scaleX(0.932);transform-origin:0 0;">DEC:</div><div class="t" style="font-size:11px;line-height:11px;color:#e4e4e4;left:1177.6px;top:767px;transform:scaleX(0.996);transform-origin:0 0;">Agr</div><div class="fld" style="left:1200.2px;top:762px;width:41px;height:20.5px;"></div><div class="t" style="font-size:11px;line-height:11px;color:#000;left:1206.2px;top:767.7px;">30</div><div class="btn" style="left:1242.2px;top:762px;width:15px;height:10.2px;"></div><div class="btn" style="left:1242.2px;top:772.2px;width:15px;height:10.2px;"></div><div style="left:1247.2px;top:765.9px;width:0;height:0;border-left:2.5px solid transparent;border-right:2.5px solid transparent;border-bottom:2.5px solid #000;"></div><div style="left:1247.2px;top:776.1px;width:0;height:0;border-left:2.5px solid transparent;border-right:2.5px solid transparent;border-top:2.5px solid #000;"></div><div class="t" style="font-size:11px;line-height:11px;color:#e4e4e4;left:1267.3px;top:767px;transform:scaleX(0.941);transform-origin:0 0;">MnMo</div><div class="fld" style="left:1301.2px;top:762px;width:51.5px;height:20.5px;"></div><div class="t" style="font-size:11px;line-height:11px;color:#000;left:1307.2px;top:767.7px;">0.35</div><div class="btn" style="left:1353.7px;top:762px;width:15px;height:10.2px;"></div><div class="btn" style="left:1353.7px;top:772.2px;width:15px;height:10.2px;"></div><div style="left:1358.7px;top:765.9px;width:0;height:0;border-left:2.5px solid transparent;border-right:2.5px solid transparent;border-bottom:2.5px solid #000;"></div><div style="left:1358.7px;top:776.1px;width:0;height:0;border-left:2.5px solid transparent;border-right:2.5px solid transparent;border-top:2.5px solid #000;"></div><div class="t" style="font-size:11px;line-height:11px;color:#fff;font-weight:bold;left:1378px;top:767px;transform:scaleX(1.034);transform-origin:0 0;">Scope:</div><div class="t" style="font-size:11px;line-height:11px;color:#e4e4e4;left:1416.6px;top:767px;transform:scaleX(0.943);transform-origin:0 0;">Mx RA</div><div class="fld" style="left:1453.3px;top:762px;width:46.7px;height:20.5px;"></div><div class="t" style="font-size:11px;line-height:11px;color:#000;left:1459.3px;top:767.7px;">2500</div><div class="btn" style="left:1501px;top:762px;width:15px;height:10.2px;"></div><div class="btn" style="left:1501px;top:772.2px;width:15px;height:10.2px;"></div><div style="left:1506px;top:765.9px;width:0;height:0;border-left:2.5px solid transparent;border-right:2.5px solid transparent;border-bottom:2.5px solid #000;"></div><div style="left:1506px;top:776.1px;width:0;height:0;border-left:2.5px solid transparent;border-right:2.5px solid transparent;border-top:2.5px solid #000;"></div><div class="t" style="font-size:11px;line-height:11px;color:#e4e4e4;left:1526px;top:767px;transform:scaleX(0.924);transform-origin:0 0;">Mx DEC</div><div class="fld" style="left:1569.4px;top:762px;width:46.6px;height:20.5px;"></div><div class="t" style="font-size:11px;line-height:11px;color:#000;left:1575.4px;top:767.7px;">2500</div><div class="btn" style="left:1617px;top:762px;width:15px;height:10.2px;"></div><div class="btn" style="left:1617px;top:772.2px;width:15px;height:10.2px;"></div><div style="left:1622px;top:765.9px;width:0;height:0;border-left:2.5px solid transparent;border-right:2.5px solid transparent;border-bottom:2.5px solid #000;"></div><div style="left:1622px;top:776.1px;width:0;height:0;border-left:2.5px solid transparent;border-right:2.5px solid transparent;border-top:2.5px solid #000;"></div><div class="fld" style="left:1643px;top:762px;width:53.5px;height:20.5px;"></div><div class="t" style="font-size:11px;line-height:11px;color:#000;left:1647px;top:767.7px;">Auto</div><div class="btn" style="left:1677.5px;top:764px;width:17px;height:16.5px;"></div><div style="left:1682px;top:770.8px;width:0;height:0;border-left:4px solid transparent;border-right:4px solid transparent;border-top:4px solid #000;"></div><div style="left:693px;top:793.5px;width:1110px;height:47px;background:#000;border-top:1.500px solid #b4b4b4;"></div><div style="left:693.7px;top:795px;width:507.5px;height:42.5px;background:#545454;border:1px solid #8a8a8a;border-bottom-color:#3a3a3a;border-right-color:#9a9a9a;"></div><div style="left:698.5px;top:803px;width:2px;height:26px;background:repeating-linear-gradient(#ddd 0 1.500px,transparent 1.500px 3px);"></div><div style="left:709.3px;top:800.7px;width:31.5px;height:30.5px;background:#e2e2e2;border:1px solid #fff;border-radius:2px;"></div><svg style="left:711px;top:802.5px;" width="28" height="27" viewBox="0 0 28 27"><g transform="rotate(-42 14 13.500)"><rect x="-3" y="12.300" width="7" height="2.600" rx="1" fill="#444"/><path d="M3.500 11.500l8-3.500h6v11h-6l-8-3.500z" fill="#a4a4a4" stroke="#2a2a2a" stroke-width="1.100"/><rect x="17.500" y="9.200" width="8" height="8.600" fill="#fafafa" stroke="#2a2a2a" stroke-width="1.100"/><path d="M20 11.500h3.500M20 15.500h3.500" stroke="#555" stroke-width="1"/></g></svg><div style="left:749px;top:800.7px;width:31.7px;height:30.5px;background:#d0f8d8;border:1px solid #ecfff0;border-radius:2px;"></div><svg style="left:751px;top:802px;" width="28" height="28" viewBox="0 0 28 28"><path d="M6 16a8.500 8.500 0 0 1 11-10" fill="none" stroke="#12915a" stroke-width="3"/><path d="M14.500 2l6 4.500-6.500 3z" fill="#12915a"/><path d="M22 12a8.500 8.500 0 0 1-11 10" fill="none" stroke="#12915a" stroke-width="3"/><path d="M13.500 26l-6-4.500 6.500-3z" fill="#12915a"/></svg><svg style="left:789px;top:799.5px;" width="32" height="32" viewBox="0 0 32 32"><defs><radialGradient id="chg"><stop offset="0" stop-color="#727272"/><stop offset="1" stop-color="#3c3c3c"/></radialGradient></defs><circle cx="16" cy="16" r="15" fill="url(#chg)" stroke="#1c1c1c" stroke-width="1.600"/><path d="M16 1v30M1 16h30" stroke="#1c1c1c" stroke-width="1.300"/><circle cx="16" cy="16" r="3" fill="none" stroke="#1c1c1c" stroke-width="1.300"/></svg><svg style="left:829.3px;top:799.6px;" width="32" height="32" viewBox="0 0 32 32"><defs><linearGradient id="stg" x1="0" y1="1" x2="1" y2="0"><stop offset="0" stop-color="#c4201c"/><stop offset="1" stop-color="#e4502c"/></linearGradient></defs><polygon points="30.8,22.1 22.1,30.8 9.9,30.8 1.2,22.1 1.2,9.9 9.9,1.2 22.1,1.2 30.8,9.9" fill="url(#stg)" stroke="#f4d8d0" stroke-width="1"/><polygon points="28.9,21.4 21.4,28.9 10.6,28.9 3.1,21.4 3.1,10.6 10.6,3.1 21.4,3.1 28.9,10.6" fill="none" stroke="#fff" stroke-width="1"/><text x="16" y="21" text-anchor="middle" font-family="Liberation Sans,sans-serif" font-weight="bold" font-size="14" fill="#fff" textLength="25" lengthAdjust="spacingAndGlyphs">STOP</text></svg><div style="left:869px;top:802px;width:1px;height:28px;background:#8a8a8a;"></div><div class="fld" style="left:875.4px;top:806.2px;width:84.2px;height:19.6px;"></div><div class="t" style="font-size:11px;line-height:11px;color:#000;left:879.4px;top:811.4px;">1.5 s</div><div class="btn" style="left:940.6px;top:808.2px;width:17px;height:15.6px;"></div><div style="left:945.1px;top:814.5px;width:0;height:0;border-left:4px solid transparent;border-right:4px solid transparent;border-top:4px solid #000;"></div><div style="left:962.7px;top:804px;width:159px;height:24px;background:#3a3a3a;"></div><div style="left:969.5px;top:814px;width:144.5px;height:2.5px;background:#e8e8e8;box-shadow:0 -1px #888;"></div><svg style="left:1078px;top:806px;" width="10" height="19.5" viewBox="0 0 10 19.5"><path d="M.500 .500h9v14l-4.500 4.500-4.500-4.500z" fill="#d4d0c8" stroke="#707070"/><path d="M1 14.500V1h8" stroke="#fff" fill="none"/></svg><div style="left:1127.3px;top:802px;width:1px;height:28px;background:#8a8a8a;"></div><svg style="left:1137px;top:801.5px;" width="32" height="29" viewBox="0 0 32 29"><path d="M3 13c-2-5 3-10 9-10 3-2 9-2 12 1 5 1 7 6 5 10 1 4-3 6-7 6l-2 5-3-1 .500-4c-5 1-9 0-11-2-3 0-5-3-3.500-5z" fill="#e8a090" stroke="#b46a5a" stroke-width="1"/><path d="M8 7c2 2 1 4-1 5M13 4c-1 3 1 5 3 5M19 5c1 2 0 4-2 5M24 8c-2 1-2 4 0 5M10 14c2-1 4 0 5 2M18 13c2 0 3 2 3 4" fill="none" stroke="#c07868" stroke-width="1"/></svg><div style="left:693px;top:840px;width:1110px;height:19.5px;background:#000;border-top:1px solid #c8c8c8;"></div><div style="left:690px;top:859px;width:1113px;height:2px;background:#d4d0c8;"></div><div class="t" style="font-size:11px;line-height:11px;color:#e8e8e8;left:695.6px;top:844.7px;transform:scaleX(0.944);transform-origin:0 0;">Guiding</div><div style="left:1388.4px;top:841px;width:1px;height:18px;background:#e0e0e0;"></div><div style="left:1415.6px;top:841px;width:1px;height:18px;background:#e0e0e0;"></div><div style="left:1479.7px;top:841px;width:1px;height:18px;background:#e0e0e0;"></div><div style="left:1591.6px;top:841px;width:1px;height:18px;background:#e0e0e0;"></div><div style="left:1704px;top:841px;width:1px;height:18px;background:#e0e0e0;"></div><div style="left:1741.6px;top:841px;width:1px;height:18px;background:#e0e0e0;"></div><div style="left:1772.8px;top:841px;width:1px;height:18px;background:#e0e0e0;"></div><div class="t" style="font-size:11px;line-height:11px;color:#e8e8e8;left:1421.9px;top:844.9px;transform:scaleX(0.834);transform-origin:0 0;">SNR</div><div class="t" style="font-size:11px;line-height:11px;color:#5ac84a;left:1454px;top:844.9px;transform:scaleX(1.024);transform-origin:0 0;">40.8</div><svg style="left:1483px;top:843.5px;" width="16" height="13" viewBox="0 0 16 13"><path d="M0 5h8V1l8 5.500L8 12V8H0z" fill="#fff"/></svg><div class="t" style="font-size:11px;line-height:11px;color:#e8e8e8;left:1509.7px;top:844.9px;transform:scaleX(1.024);transform-origin:0 0;">34 ms, 0.3 px</div><div class="t" style="font-size:11px;line-height:11px;color:#5ac84a;left:1711px;top:844.9px;transform:scaleX(0.981);transform-origin:0 0;">Dark</div><div class="t" style="font-size:11px;line-height:11px;color:#5ac84a;left:1749.4px;top:844.9px;transform:scaleX(0.872);transform-origin:0 0;">Cal</div><svg style="left:1783px;top:842px;" width="17" height="17" viewBox="0 0 17 17"><defs><radialGradient id="led" cx=".4" cy=".35" r=".7"><stop offset="0" stop-color="#38c838"/><stop offset="1" stop-color="#0c8c18"/></radialGradient></defs><circle cx="8.600" cy="8.300" r="7.800" fill="url(#led)"/></svg>
</div></body></html>
